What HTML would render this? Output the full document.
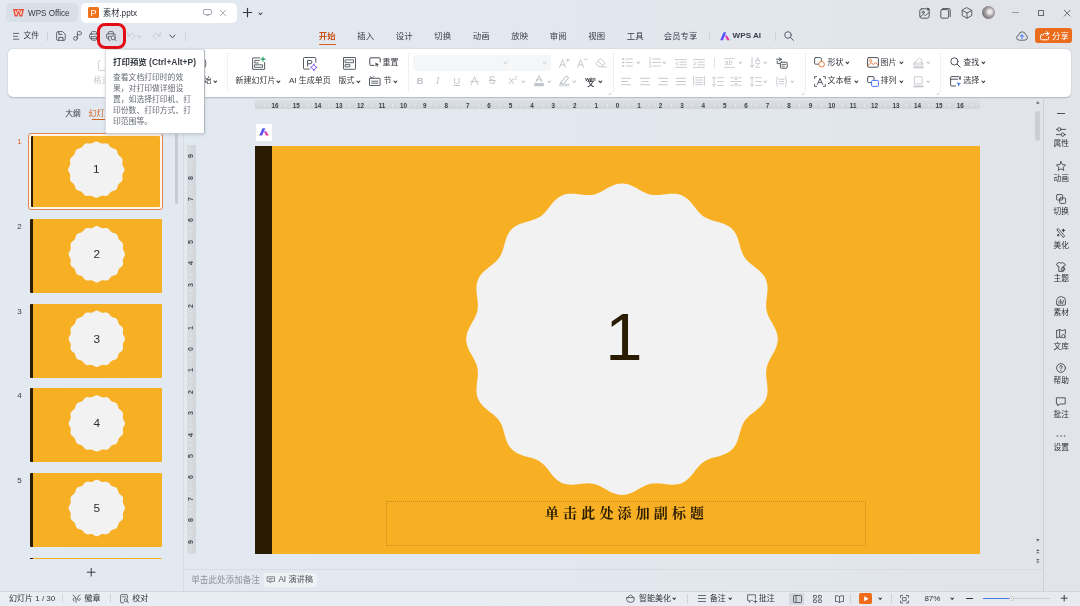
<!DOCTYPE html>
<html><head><meta charset="utf-8"><title>WPS</title><style>
*{box-sizing:border-box;margin:0;padding:0}
html,body{width:1080px;height:606px;overflow:hidden}
body{position:relative;background:#e2e9f0;font-family:"Liberation Sans","Noto Sans CJK SC",sans-serif;font-size:8.4px;color:#3b4048;line-height:1}
.a{position:absolute}
.t{position:absolute;white-space:nowrap;line-height:10px;height:10px}
svg{position:absolute;overflow:visible}
.s{fill:none;stroke:#454a52;stroke-width:1;stroke-linecap:round;stroke-linejoin:round}
.g{fill:none;stroke:#c0c4ca;stroke-width:0.9;stroke-linecap:round;stroke-linejoin:round}
.sep{position:absolute;width:1px;background:#eff0f3}
.t i{display:inline-block;width:var(--w,1em);text-align:center;font-style:normal;position:relative}
</style></head><body><div id="w" style="position:absolute;left:0;top:0;width:1080px;height:606px;will-change:transform;background:linear-gradient(90deg,#e2e9f0 0,#e2e8ef 50%,#e2e7ed 72%,#e1e5ea 88%,#e1e4e9 100%)">
<div class="a" style="left:6px;top:3px;width:72px;height:19px;background:#d9dfe6;border-radius:5px"></div>
<svg style="left:12.5px;top:8.5px" width="11" height="7.5" viewBox="0 0 22 15"><path d="M0 0 H22 L18.6 15 H13.2 L11 8.5 L8.8 15 H3.4 Z" fill="#e5503a"/><path d="M4.6 3 L6.4 11.2 L9.2 3 H12.8 L15.6 11.2 L17.4 3" fill="none" stroke="#fbeeea" stroke-width="1.8" stroke-linejoin="miter"/></svg>
<div class="t" style="left:27.5px;top:7.5px;font-size:8.7px;transform:scaleX(0.93);transform-origin:0 0;color:#33373e">WPS Office</div>
<div class="a" style="left:81px;top:3px;width:156px;height:19.5px;background:#fff;border-radius:5px"></div>
<div class="a" style="left:88px;top:7.3px;width:10.6px;height:10.4px;background:#f0721b;border-radius:1.5px"></div>
<div class="t" style="left:90.5px;top:7.5px;font-size:9px;color:#fff">P</div>
<div class="t" style="left:103px;top:7.5px;font-size:8.6px;transform:scaleX(0.95);transform-origin:0 0;color:#2f333a"><i>素</i><i>材</i>.pptx</div>
<svg style="left:202.5px;top:9px" width="9" height="7" viewBox="0 0 9 7"><rect x="0.5" y="0.5" width="8" height="5" rx="1.5" class="s" style="stroke:#9aa0a8;stroke-width:0.9"/><path d="M3.5 6.6 H5.5" class="s" style="stroke:#9aa0a8;stroke-width:0.8"/></svg>
<svg style="left:220.3px;top:9.7px" width="6" height="6" viewBox="0 0 6 6"><path d="M0.3 0.3 L5.7 5.7 M5.7 0.3 L0.3 5.7" class="s" style="stroke:#a4a9b0;stroke-width:0.9"/></svg>
<svg style="left:242.5px;top:8.3px" width="9" height="9" viewBox="0 0 9 9"><path d="M4.5 0.3 V8.7 M0.3 4.5 H8.7" class="s" style="stroke:#33373e;stroke-width:1.2"/></svg>
<svg class="a" style="left:258.5px;top:12.6px" width="2.95" height="1.67" viewBox="0 0 2.95 1.67"><path d="M0 0 L1.475 1.67 L2.95 0" fill="none" stroke="#4a4f57" stroke-width="1.1" stroke-linecap="round" stroke-linejoin="round"/></svg>
<svg style="left:919px;top:7px" width="12" height="12" viewBox="0 0 12 12"><rect x="0.8" y="1.8" width="9.4" height="9.4" rx="2" class="s" style="stroke-width:0.9"/><circle cx="4.2" cy="5.2" r="1.1" class="s" style="stroke-width:0.8"/><path d="M1.2 9.8 L4.6 7.2 L6.4 8.6 L9.8 5.6" class="s" style="stroke-width:0.8"/><path d="M8.4 0.6 L11.2 2.2 L8.4 3.8 Z" fill="#3b4048"/></svg>
<svg style="left:940px;top:7.5px" width="11" height="11" viewBox="0 0 11 11"><rect x="0.8" y="1.6" width="7.8" height="8.6" rx="1.2" class="s" style="stroke-width:0.9"/><path d="M2.6 0.6 H9 Q10.2 0.6 10.2 1.8 V8.6" class="s" style="stroke-width:0.9"/></svg>
<svg style="left:960.5px;top:7px" width="12" height="12" viewBox="0 0 12 12"><path d="M6 0.8 L10.8 3.4 V8.6 L6 11.2 L1.2 8.6 V3.4 Z M1.4 3.5 L6 6 L10.6 3.5 M6 6 V11" class="s" style="stroke-width:0.85"/></svg>
<div class="a" style="left:981.5px;top:6.3px;width:13px;height:13px;border-radius:50%;background:radial-gradient(circle at 60% 45%,#e9e6e6 0 18%,#a9a3a8 40%,#6e6a72 75%,#8c8a92 100%)"></div>
<div class="a" style="left:1011.5px;top:11.8px;width:7px;height:1px;background:#959aa2"></div>
<div class="a" style="left:1037.9px;top:9.5px;width:6.6px;height:6.6px;border:0.9px solid #656a72;border-radius:0.5px"></div>
<svg style="left:1063.8px;top:9.7px" width="6.4" height="6.4" viewBox="0 0 7 7"><path d="M0.3 0.3 L6.7 6.7 M6.7 0.3 L0.3 6.7" class="s" style="stroke:#4a4f57;stroke-width:0.9"/></svg>
<svg style="left:12.6px;top:32.6px" width="6.2" height="6.6" viewBox="0 0 6.2 6.6"><path d="M0.4 0.4 H5.8 M0.4 3.3 H4.6 M0.4 6.2 H5.8" class="s" style="stroke-width:0.8"/></svg>
<div class="t" style="left:23.4px;top:30.9px;font-size:7.8px;color:#33373e"><i>文</i><i>件</i></div>
<div class="sep" style="left:47px;top:31.5px;height:9px;background:#cfd3d9"></div>
<svg style="left:55.5px;top:31.2px" width="10" height="10" viewBox="0 0 10 10"><path d="M0.6 1.8 Q0.6 0.6 1.8 0.6 H6.6 L9.2 3.2 V8.2 Q9.2 9.4 8 9.4 H1.8 Q0.6 9.4 0.6 8.2 Z" class="s" style="stroke-width:0.82;stroke:#4a4f57"/><path d="M2.8 0.8 V3.4 H6 " class="s" style="stroke-width:0.9"/><path d="M2.8 9.2 V6.4 H7 V9.2" class="s" style="stroke-width:0.9"/></svg>
<svg style="left:73px;top:31.2px" width="9" height="10" viewBox="0 0 9 10"><path d="M4.4 6.2 V1.4 Q4.4 0.6 5.2 0.6 H7.2 Q8.4 0.6 8.4 2.2 Q8.4 3.8 7.2 3.8 H4.6" class="s" style="stroke-width:0.82;stroke:#4a4f57"/><circle cx="2.5" cy="7.4" r="1.9" class="s" style="stroke-width:0.82;stroke:#4a4f57"/></svg>
<svg style="left:89px;top:31.4px" width="10" height="10" viewBox="0 0 10 10"><path d="M2.4 3 V1.6 Q2.4 0.6 3.4 0.6 H6.6 Q7.6 0.6 7.6 1.6 V3" class="s" style="stroke-width:0.82;stroke:#4a4f57"/><rect x="0.6" y="3" width="8.8" height="4.6" rx="1.2" class="s" style="stroke-width:0.82;stroke:#4a4f57"/><path d="M2.4 5.6 H7.6 V8.4 Q7.6 9.2 6.8 9.2 H3.2 Q2.4 9.2 2.4 8.4 Z" fill="#e2e9f0" class="s" style="stroke-width:0.82;stroke:#4a4f57"/></svg>
<div class="a" style="left:100px;top:25.5px;width:24px;height:21px;background:#dde1e7;border-radius:5px"></div>
<svg style="left:105.6px;top:31.4px" width="11" height="10" viewBox="0 0 11 10"><path d="M2.4 2.8 V1.6 Q2.4 0.6 3.4 0.6 H6.4 Q7.4 0.6 7.4 1.6 V2.8" class="s" style="stroke-width:0.82;stroke:#4a4f57"/><path d="M9.2 4.4 V4 Q9.2 2.8 8 2.8 H1.8 Q0.6 2.8 0.6 4 V6.4 Q0.6 7.4 1.6 7.4 H2.4" class="s" style="stroke-width:0.82;stroke:#4a4f57"/><path d="M4.2 9.2 H3.2 Q2.4 9.2 2.4 8.4 V5.4 H4.4" class="s" style="stroke-width:0.82;stroke:#4a4f57"/><circle cx="7.2" cy="6.8" r="2.1" class="s" style="stroke-width:0.82;stroke:#4a4f57"/><path d="M8.8 8.4 L10.2 9.6" class="s" style="stroke-width:0.82;stroke:#4a4f57"/></svg>
<div class="a" style="left:97.4px;top:22.9px;width:28.8px;height:26.4px;border:3.8px solid #e50c16;border-radius:8px"></div>
<svg style="left:127px;top:32px" width="9" height="8" viewBox="0 0 9 8"><path d="M0.8 1 V4 H3.8 M1 3.8 Q3 0.8 6 1.6 Q8.4 2.6 7.8 5 Q7 7 4.6 7.2" class="g" style="stroke-width:0.9;stroke:#c6cad0"/></svg>
<svg class="a" style="left:138.3px;top:35.9px" width="2.62" height="1.5" viewBox="0 0 2.62 1.5"><path d="M0 0 L1.31 1.5 L2.62 0" fill="none" stroke="#c3c7cd" stroke-width="1.1" stroke-linecap="round" stroke-linejoin="round"/></svg>
<svg style="left:152px;top:32px" width="9" height="8" viewBox="0 0 9 8"><path d="M8.2 1 V4 H5.2 M8 3.8 Q6 0.8 3 1.6 Q0.6 2.6 1.2 5 Q2 7 4.4 7.2" class="g" style="stroke-width:0.9;stroke:#c6cad0"/></svg>
<svg class="a" style="left:169.7px;top:34.8px" width="4.92" height="2.9" viewBox="0 0 4.92 2.9"><path d="M0 0 L2.46 2.9 L4.92 0" fill="none" stroke="#4a4f57" stroke-width="1.0" stroke-linecap="round" stroke-linejoin="round"/></svg>
<div class="sep" style="left:185px;top:31.5px;height:9px;background:#cfd3d9"></div>
<div class="t" style="left:318.8px;top:31.3px;font-size:8.4px;color:#c9531a;font-weight:bold"><i>开</i><i>始</i></div>
<div class="a" style="left:318.8px;top:43.6px;width:16.8px;height:1.5px;background:#d4611c"></div>
<div class="t" style="left:357.3px;top:31.3px;font-size:8.4px;color:#3b4048"><i>插</i><i>入</i></div>
<div class="t" style="left:395.8px;top:31.3px;font-size:8.4px;color:#3b4048"><i>设</i><i>计</i></div>
<div class="t" style="left:434.3px;top:31.3px;font-size:8.4px;color:#3b4048"><i>切</i><i>换</i></div>
<div class="t" style="left:472.8px;top:31.3px;font-size:8.4px;color:#3b4048"><i>动</i><i>画</i></div>
<div class="t" style="left:511.3px;top:31.3px;font-size:8.4px;color:#3b4048"><i>放</i><i>映</i></div>
<div class="t" style="left:549.8px;top:31.3px;font-size:8.4px;color:#3b4048"><i>审</i><i>阅</i></div>
<div class="t" style="left:588.3px;top:31.3px;font-size:8.4px;color:#3b4048"><i>视</i><i>图</i></div>
<div class="t" style="left:626.8px;top:31.3px;font-size:8.4px;color:#3b4048"><i>工</i><i>具</i></div>
<div class="t" style="left:663.8px;top:31.3px;font-size:8.4px;color:#3b4048"><i>会</i><i>员</i><i>专</i><i>享</i></div>
<div class="sep" style="left:708.5px;top:31.5px;height:9px;background:#cfd3d9"></div>
<svg style="left:719.5px;top:32.2px" width="10" height="8.4" viewBox="0 0 20 17"><defs><linearGradient id="ai1" x1="0" y1="0" x2="1" y2="1"><stop offset="0" stop-color="#3a6bf5"/><stop offset="1" stop-color="#7a3cf0"/></linearGradient><linearGradient id="ai2" x1="0" y1="0" x2="1" y2="1"><stop offset="0" stop-color="#c53af0"/><stop offset="1" stop-color="#f5406a"/></linearGradient></defs><path d="M7 0.4 H12.4 L6 16.6 H0.2 Z" fill="url(#ai1)"/><path d="M9.8 7.2 L14 7.2 L19.8 16.6 H13.8 Z" fill="url(#ai2)"/></svg>
<div class="t" style="left:732.6px;top:31.3px;font-size:8.1px;font-weight:bold;color:#3b4048">WPS AI</div>
<div class="sep" style="left:775px;top:31.5px;height:9px;background:#cfd3d9"></div>
<svg style="left:783.5px;top:31.2px" width="10" height="10" viewBox="0 0 10 10"><circle cx="4" cy="4" r="3.3" class="s" style="stroke-width:0.95;stroke:#555a62"/><path d="M6.4 6.4 L9.4 9.4" class="s" style="stroke-width:0.95;stroke:#555a62"/></svg>
<svg style="left:1016px;top:30.5px" width="12" height="10" viewBox="0 0 12 10"><path d="M3 9.2 Q0.6 9.2 0.6 6.8 Q0.6 4.8 2.6 4.4 Q3 0.8 6.2 0.8 Q9 0.8 9.6 3.8 Q11.4 4.2 11.4 6.4 Q11.4 9.2 8.8 9.2 Z" class="s" style="stroke-width:0.9;stroke:#555a62" fill="#fff"/><path d="M6 7.6 V3.8 M4.4 5.4 L6 3.8 L7.6 5.4" class="s" style="stroke:#3a6bf5;stroke-width:1"/></svg>
<div class="a" style="left:1035.2px;top:28px;width:36.9px;height:15.4px;background:#ea6c1c;border-radius:3px"></div>
<svg style="left:1040px;top:31px" width="10" height="9.5" viewBox="0 0 10 9.5"><path d="M6.4 0.6 L9 2.6 L6.4 4.6 M9 2.6 H4.6 Q2.8 2.6 2.8 4.4" class="s" style="stroke:#fff;stroke-width:1"/><path d="M1.6 3.4 Q0.6 3.4 0.6 4.6 V7.6 Q0.6 8.8 1.8 8.8 H7.4 Q8.6 8.8 8.6 7.6 V6" class="s" style="stroke:#fff;stroke-width:1"/></svg>
<div class="t" style="left:1052px;top:30.8px;font-size:8.4px;color:#fff"><i>分</i><i>享</i></div>
<div class="a" style="left:8.2px;top:48.7px;width:1063px;height:48.2px;background:#fff;border-radius:5px;box-shadow:0 0.5px 1.5px rgba(105,110,120,0.4)"></div>
<svg style="left:98.4px;top:59.4px" width="9" height="12" viewBox="0 0 9 12"><path d="M2.4 1.6 H1.6 Q0.6 1.6 0.6 2.6 V10.4 Q0.6 11.4 1.6 11.4 H7.4 Q8.4 11.4 8.4 10.4 V2.6" class="g" style="stroke:#c9cdd3"/></svg>
<div class="t" style="left:93.4px;top:75.6px;font-size:8px;color:#c6cad0;"><i>格</i><i>式</i></div>
<div class="t" style="left:204.0px;top:57.6px;font-size:8.4px;color:#33373e;">)</div>
<div class="t" style="left:203.6px;top:76.2px;font-size:8px;color:#33373e;"><i>始</i></div>
<svg class="a" style="left:214.2px;top:80.8px" width="2.62" height="1.5" viewBox="0 0 2.62 1.5"><path d="M0 0 L1.31 1.5 L2.62 0" fill="none" stroke="#33373e" stroke-width="1.1" stroke-linecap="round" stroke-linejoin="round"/></svg>
<div class="sep" style="left:227px;top:53px;height:39px"></div>
<svg style="left:252px;top:56px" width="15" height="14" viewBox="0 0 15 14"><path d="M7.6 1.9 H1 Q0.6 1.9 0.6 2.3 V13 Q0.6 13.4 1 13.4 H12.2 Q12.6 13.4 12.6 13 V6.6" class="s" style="stroke-width:0.9"/><path d="M7.4 4.4 H2.8 V7 H6.4" class="s" style="stroke-width:0.85"/><rect x="2.8" y="8.8" width="7.8" height="2.5" class="s" style="stroke-width:0.85"/><path d="M11 1 V5.2 M8.9 3.1 H13.1" fill="none" stroke="#1f9c5a" stroke-width="1.05" stroke-linecap="round"/></svg>
<div class="t" style="left:235.6px;top:76px;font-size:8px;color:#33373e;"><i>新</i><i>建</i><i>幻</i><i>灯</i><i>片</i></div>
<svg class="a" style="left:277.2px;top:80.6px" width="2.79" height="1.58" viewBox="0 0 2.79 1.58"><path d="M0 0 L1.395 1.58 L2.79 0" fill="none" stroke="#33373e" stroke-width="1.1" stroke-linecap="round" stroke-linejoin="round"/></svg>
<svg style="left:303.4px;top:57.4px" width="15" height="14" viewBox="0 0 15 14"><path d="M12.8 5.4 V1.4 Q12.8 0.5 11.9 0.5 H1.4 Q0.5 0.5 0.5 1.4 V11.2 Q0.5 12.1 1.4 12.1 H6.4" class="s" style="stroke-width:0.9"/><path d="M4.6 9.2 V3.4 H7 Q8.9 3.4 8.9 5.1 Q8.9 6.8 7 6.8 H4.8" class="s" style="stroke-width:0.95"/><path d="M10.8 6.8 Q11.2 9.8 14.2 10.4 Q11.2 11 10.8 14 Q10.4 11 7.4 10.4 Q10.4 9.8 10.8 6.8 Z" fill="#fff" stroke="#7a56ee" stroke-width="0.9" stroke-linejoin="round"/></svg>
<div class="t" style="left:289px;top:76px;font-size:8px;color:#33373e;">AI <i>生</i><i>成</i><i>单</i><i>页</i></div>
<svg style="left:343.3px;top:57.4px" width="13" height="13" viewBox="0 0 13 13"><rect x="0.5" y="0.5" width="12" height="11.8" rx="0.6" class="s" style="stroke-width:0.9"/><rect x="2.5" y="2.9" width="8" height="2.8" class="s" style="stroke-width:0.85"/><rect x="2.5" y="7.6" width="4.4" height="2.2" class="s" style="stroke-width:0.85"/></svg>
<div class="t" style="left:338.6px;top:76px;font-size:8px;color:#33373e;"><i>版</i><i>式</i></div>
<svg class="a" style="left:357.2px;top:80.6px" width="2.79" height="1.58" viewBox="0 0 2.79 1.58"><path d="M0 0 L1.395 1.58 L2.79 0" fill="none" stroke="#33373e" stroke-width="1.1" stroke-linecap="round" stroke-linejoin="round"/></svg>
<svg style="left:369px;top:57.4px" width="12" height="11" viewBox="0 0 12 11"><path d="M11.2 5 V1.8 Q11.2 0.8 10.2 0.8 H1.8 Q0.8 0.8 0.8 1.8 V7.4 Q0.8 8.4 1.8 8.4 H5" class="s" style="stroke-width:1"/><path d="M6.4 5.4 L10 7.4 L8.4 7.9 L9.3 9.7 L8.6 10 L7.7 8.3 L6.6 9.4 Z" fill="#454a52"/></svg>
<div class="t" style="left:382.6px;top:57.7px;font-size:8px;color:#33373e;"><i>重</i><i>置</i></div>
<svg style="left:368.8px;top:76px" width="12" height="10" viewBox="0 0 12 10"><path d="M1.3 0.4 L3.1 2.3 L4.9 0.4" class="s" style="stroke-width:0.8"/><rect x="0.5" y="2.3" width="10.6" height="7.2" rx="0.5" class="s" style="stroke-width:0.9"/><path d="M2.6 5.2 H9 M2.6 7.2 H9" class="s" style="stroke-width:0.85"/></svg>
<div class="t" style="left:383.6px;top:76px;font-size:8px;color:#33373e;"><i>节</i></div>
<svg class="a" style="left:394.0px;top:80.6px" width="2.79" height="1.58" viewBox="0 0 2.79 1.58"><path d="M0 0 L1.395 1.58 L2.79 0" fill="none" stroke="#33373e" stroke-width="1.1" stroke-linecap="round" stroke-linejoin="round"/></svg>
<div class="sep" style="left:407.8px;top:53px;height:39px"></div>
<div class="a" style="left:412.6px;top:55px;width:138px;height:15.6px;background:#f5f6f8;border-radius:4px"></div>
<div class="a" style="left:510.4px;top:55.4px;width:1px;height:15px;background:#fbfbfc"></div>
<svg class="a" style="left:503.5px;top:62.0px" width="2.95" height="1.58" viewBox="0 0 2.95 1.58"><path d="M0 0 L1.475 1.58 L2.95 0" fill="none" stroke="#d3d6db" stroke-width="1.1" stroke-linecap="round" stroke-linejoin="round"/></svg>
<svg class="a" style="left:542.5px;top:62.0px" width="2.95" height="1.58" viewBox="0 0 2.95 1.58"><path d="M0 0 L1.475 1.58 L2.95 0" fill="none" stroke="#d3d6db" stroke-width="1.1" stroke-linecap="round" stroke-linejoin="round"/></svg>
<svg style="left:558.5px;top:57.5px" width="11" height="10" viewBox="0 0 11 10"><path d="M0.6 9.4 L3.6 1.6 L6.6 9.4 M1.6 6.8 H5.6" class="g"/><path d="M8.8 0.6 V3.6 M7.3 2.1 H10.3" class="g" style="stroke-width:0.8"/></svg>
<svg style="left:576.5px;top:57.5px" width="11" height="10" viewBox="0 0 11 10"><path d="M0.6 9.4 L3.6 1.6 L6.6 9.4 M1.6 6.8 H5.6" class="g"/><path d="M7.3 1.4 H10.3" class="g" style="stroke-width:0.8"/></svg>
<svg style="left:594.5px;top:57.6px" width="12" height="10" viewBox="0 0 12 10"><path d="M5.8 0.8 L10.4 5 L6.8 8.6 H3.6 L1 6 Z M3.2 3.4 L7.8 7.6 M7 9 H11.4" class="g"/></svg>
<div class="t" style="left:416.4px;top:76px;font-size:9.6px;color:#c0c4ca;font-weight:bold">B</div>
<div class="t" style="left:436px;top:76px;font-size:10px;color:#c0c4ca;font-style:italic;font-family:'Liberation Serif',serif">I</div>
<div class="t" style="left:453.4px;top:76px;font-size:9.2px;color:#c0c4ca;text-decoration:underline">U</div>
<svg style="left:470px;top:76.4px" width="9" height="9" viewBox="0 0 9 9"><path d="M1.2 8.6 L4.5 0.8 L7.8 8.6" class="g"/><path d="M0.2 5.4 H8.8" class="g" style="stroke-width:0.8"/></svg>
<div class="t" style="left:488.8px;top:76px;font-size:10.2px;color:#c0c4ca;text-decoration:line-through">S</div>
<div class="t" style="left:508.4px;top:76px;font-size:9px;color:#c0c4ca;">X</div>
<div class="t" style="left:514.6px;top:72.6px;font-size:5px;color:#c0c4ca;">2</div>
<svg class="a" style="left:521.5px;top:80.7px" width="2.62" height="1.5" viewBox="0 0 2.62 1.5"><path d="M0 0 L1.31 1.5 L2.62 0" fill="none" stroke="#c0c4ca" stroke-width="1.1" stroke-linecap="round" stroke-linejoin="round"/></svg>
<svg style="left:533.5px;top:74.8px" width="10" height="11" viewBox="0 0 10 11"><path d="M2 6.8 L5 0.8 L8 6.8 M3 4.8 H7" class="g" style="stroke:#b4b9c0"/><rect x="0.2" y="8" width="9.6" height="3.2" fill="#c3c7cd"/></svg>
<svg class="a" style="left:547.7px;top:80.7px" width="2.62" height="1.5" viewBox="0 0 2.62 1.5"><path d="M0 0 L1.31 1.5 L2.62 0" fill="none" stroke="#c0c4ca" stroke-width="1.1" stroke-linecap="round" stroke-linejoin="round"/></svg>
<svg style="left:558.5px;top:74.9px" width="11" height="11" viewBox="0 0 11 11"><path d="M2 7.4 L7.4 1 L9.6 2.8 L4.6 9 Z M2 7.4 L1.4 9.4 L4.6 9" class="g" style="stroke:#a9aeb6"/><rect x="0.2" y="8.6" width="10.4" height="2.6" fill="#d6d9de"/></svg>
<svg class="a" style="left:573.3px;top:80.7px" width="2.62" height="1.5" viewBox="0 0 2.62 1.5"><path d="M0 0 L1.31 1.5 L2.62 0" fill="none" stroke="#c0c4ca" stroke-width="1.1" stroke-linecap="round" stroke-linejoin="round"/></svg>
<div class="t" style="left:585.2px;top:74px;font-size:5.6px;color:#33373e;letter-spacing:-0.2px;font-weight:bold">wén</div>
<div class="t" style="left:587.3px;top:78.6px;font-size:7px;color:#33373e;font-weight:bold"><i>文</i></div>
<svg class="a" style="left:599.4px;top:80.6px" width="2.79" height="1.58" viewBox="0 0 2.79 1.58"><path d="M0 0 L1.395 1.58 L2.79 0" fill="none" stroke="#33373e" stroke-width="1.1" stroke-linecap="round" stroke-linejoin="round"/></svg>
<svg style="left:607.6px;top:92.2px" width="3" height="3" viewBox="0 0 3 3"><path d="M2.6 0.4 V2.6 H0.4" fill="none" stroke="#c4c8ce" stroke-width="0.7"/></svg>
<div class="sep" style="left:613.4px;top:53px;height:39px"></div>
<svg style="left:622px;top:58.4px" width="12" height="9" viewBox="0 0 12 9"><path d="M0.6 1 H1.6 M0.6 4.5 H1.6 M0.6 8 H1.6" fill="none" stroke="#c0c4ca" stroke-width="1.3" stroke-linecap="round"/><path d="M4 1 H10.4 M4 4.5 H10.4 M4 8 H10.4" class="g" style="stroke-width:0.9"/></svg>
<svg class="a" style="left:636.9px;top:62.0px" width="2.62" height="1.5" viewBox="0 0 2.62 1.5"><path d="M0 0 L1.31 1.5 L2.62 0" fill="none" stroke="#c0c4ca" stroke-width="1.1" stroke-linecap="round" stroke-linejoin="round"/></svg>
<svg style="left:648.6px;top:58.4px" width="12" height="9" viewBox="0 0 12 9"><path d="M1.2 -0.6 V2.4 M0.4 3.8 H1.8 V5 H0.4 M0.4 7 H1.8 V9.4 H0.4" class="g" style="stroke-width:0.7"/><path d="M4 1 H11.4 M4 4.5 H11.4 M4 8 H11.4" class="g" style="stroke-width:0.9"/></svg>
<svg class="a" style="left:663.3px;top:62.0px" width="2.62" height="1.5" viewBox="0 0 2.62 1.5"><path d="M0 0 L1.31 1.5 L2.62 0" fill="none" stroke="#c0c4ca" stroke-width="1.1" stroke-linecap="round" stroke-linejoin="round"/></svg>
<svg style="left:675px;top:58.6px" width="12" height="9" viewBox="0 0 12 9"><path d="M0.4 0.6 H11.4 M5 3.2 H11.4 M5 5.8 H11.4 M0.4 8.4 H11.4 M3.2 3 L0.8 4.5 L3.2 6" class="g" style="stroke-width:0.85"/></svg>
<svg style="left:693.2px;top:58.6px" width="12" height="9" viewBox="0 0 12 9"><path d="M0.4 0.6 H11.4 M5 3.2 H11.4 M5 5.8 H11.4 M0.4 8.4 H11.4 M0.8 3 L3.2 4.5 L0.8 6" class="g" style="stroke-width:0.85"/></svg>
<div class="sep" style="left:714px;top:58px;height:10px;background:#dfe2e6"></div>
<svg style="left:724px;top:57.6px" width="11" height="10" viewBox="0 0 11 10"><path d="M0.4 0.6 H10.6 M0.4 9.4 H10.6" class="g" style="stroke-width:0.8"/></svg>
<div class="t" style="left:724.4px;top:57.9px;font-size:7.4px;color:#c0c4ca;">ab</div>
<svg class="a" style="left:738.5px;top:62.0px" width="2.62" height="1.5" viewBox="0 0 2.62 1.5"><path d="M0 0 L1.31 1.5 L2.62 0" fill="none" stroke="#c0c4ca" stroke-width="1.1" stroke-linecap="round" stroke-linejoin="round"/></svg>
<svg style="left:749.5px;top:57.2px" width="11" height="11" viewBox="0 0 11 11"><path d="M2 0.6 V10 M0.4 8.2 L2 10.2 L3.6 8.2" class="g"/><path d="M5.4 5 L7.6 0.6 L9.8 5 M6.2 3.6 H9" class="g" style="stroke-width:0.8"/><path d="M5.6 6.4 H9.6 L5.6 10.4 H9.8" class="g" style="stroke-width:0.8"/></svg>
<svg class="a" style="left:763.7px;top:62.0px" width="2.62" height="1.5" viewBox="0 0 2.62 1.5"><path d="M0 0 L1.31 1.5 L2.62 0" fill="none" stroke="#c0c4ca" stroke-width="1.1" stroke-linecap="round" stroke-linejoin="round"/></svg>
<svg style="left:776px;top:57px" width="12" height="12" viewBox="0 0 12 12"><path d="M0.6 2.2 H5.4 M3.2 0.8 L5.6 2.4 L3.2 4" class="s" style="stroke-width:0.9"/><path d="M1.2 4 V6.6 H3.6" class="s" style="stroke-width:0.9"/><rect x="4.4" y="5.2" width="6.8" height="6" rx="1" class="s" style="stroke-width:0.95"/><path d="M6 7.4 H9.6 M6 9.2 H8.4" class="s" style="stroke-width:0.8"/></svg>
<svg style="left:621.4px;top:77px" width="12" height="9" viewBox="0 0 12 9"><path d="M0.5 1.3 H9.5 M0.5 4.5 H6.5 M0.5 7.7 H9.5 " fill="none" stroke="#c0c4ca" stroke-width="0.9" stroke-linecap="round"/></svg>
<svg style="left:639.6px;top:77px" width="12" height="9" viewBox="0 0 12 9"><path d="M0.5 1.3 H9.5 M2 4.5 H8 M0.5 7.7 H9.5 " fill="none" stroke="#c0c4ca" stroke-width="0.9" stroke-linecap="round"/></svg>
<svg style="left:657.8px;top:77px" width="12" height="9" viewBox="0 0 12 9"><path d="M0.5 1.3 H9.5 M3.5 4.5 H9.5 M0.5 7.7 H9.5 " fill="none" stroke="#c0c4ca" stroke-width="0.9" stroke-linecap="round"/></svg>
<svg style="left:676px;top:77px" width="12" height="9" viewBox="0 0 12 9"><path d="M0.5 1.3 H9.5 M0.5 4.5 H9.5 M0.5 7.7 H9.5 " fill="none" stroke="#c0c4ca" stroke-width="0.9" stroke-linecap="round"/></svg>
<svg style="left:692.6px;top:76.4px" width="12" height="10" viewBox="0 0 12 10"><path d="M0.6 0.6 V9.4 M11.4 0.6 V9.4 M2.6 1.6 H9.4 M2.6 4 H9.4 M2.6 6.4 H9.4 M2.6 8.6 H9.4" class="g" style="stroke-width:0.85"/></svg>
<svg style="left:712.4px;top:76px" width="12" height="11" viewBox="0 0 12 11"><path d="M2 1 V10 M0.4 2.6 L2 0.8 L3.6 2.6 M0.4 8.4 L2 10.2 L3.6 8.4 M5.6 1.6 H11.4 M5.6 5.5 H11.4 M5.6 9.4 H11.4" class="g" style="stroke-width:0.85"/></svg>
<svg style="left:730.2px;top:76px" width="12" height="11" viewBox="0 0 12 11"><path d="M0.6 5.5 H11.4 M6 0.4 V3.6 M4.6 2.2 L6 3.8 L7.4 2.2 M6 10.6 V7.4 M4.6 8.8 L6 7.2 L7.4 8.8 M0.8 1.6 H3.6 M8.4 1.6 H11.2 M0.8 9.4 H3.6 M8.4 9.4 H11.2" class="g" style="stroke-width:0.8"/></svg>
<svg style="left:749.6px;top:76px" width="12" height="11" viewBox="0 0 12 11"><path d="M2 1 V10 M0.4 2.6 L2 0.8 L3.6 2.6 M0.4 8.4 L2 10.2 L3.6 8.4 M5.6 1.6 H11.4 M5.6 5.5 H11.4 M5.6 9.4 H11.4" class="g" style="stroke-width:0.85"/></svg>
<svg class="a" style="left:763.7px;top:80.7px" width="2.62" height="1.5" viewBox="0 0 2.62 1.5"><path d="M0 0 L1.31 1.5 L2.62 0" fill="none" stroke="#c0c4ca" stroke-width="1.1" stroke-linecap="round" stroke-linejoin="round"/></svg>
<svg style="left:775px;top:75.8px" width="13" height="11" viewBox="0 0 13 11"><path d="M2.4 0.6 Q0.4 5.5 2.4 10.4 M10.6 0.6 Q12.6 5.5 10.6 10.4 M4 3.2 H9 M4 5.5 H9 M4 7.8 H9" class="g" style="stroke-width:0.85"/></svg>
<svg class="a" style="left:790.7px;top:80.7px" width="2.62" height="1.5" viewBox="0 0 2.62 1.5"><path d="M0 0 L1.31 1.5 L2.62 0" fill="none" stroke="#c0c4ca" stroke-width="1.1" stroke-linecap="round" stroke-linejoin="round"/></svg>
<svg style="left:800.8px;top:92.2px" width="3" height="3" viewBox="0 0 3 3"><path d="M2.6 0.4 V2.6 H0.4" fill="none" stroke="#c4c8ce" stroke-width="0.7"/></svg>
<div class="sep" style="left:804.8px;top:53px;height:39px"></div>
<svg style="left:814px;top:57.2px" width="12" height="11" viewBox="0 0 12 11"><rect x="0.6" y="0.6" width="6.8" height="6.6" rx="1" class="s" style="stroke-width:0.9"/><circle cx="7.6" cy="7.2" r="2.8" fill="#fff" stroke="#e8702a" stroke-width="0.9"/></svg>
<div class="t" style="left:827.4px;top:57.8px;font-size:8px;color:#33373e;"><i>形</i><i>状</i></div>
<svg class="a" style="left:846.4px;top:62.2px" width="2.79" height="1.58" viewBox="0 0 2.79 1.58"><path d="M0 0 L1.395 1.58 L2.79 0" fill="none" stroke="#33373e" stroke-width="1.1" stroke-linecap="round" stroke-linejoin="round"/></svg>
<svg style="left:814px;top:75.8px" width="12" height="11" viewBox="0 0 12 11"><path d="M2.6 0.6 H0.6 V2.6 M9.4 0.6 H11.4 V2.6 M2.6 10.4 H0.6 V8.4 M9.4 10.4 H11.4 V8.4" class="s" style="stroke-width:0.85"/><path d="M3.4 8.4 L6 2.4 L8.6 8.4 M4.4 6.4 H7.6" class="s" style="stroke-width:0.9"/></svg>
<div class="t" style="left:827.4px;top:76.2px;font-size:8px;color:#33373e;"><i>文</i><i>本</i><i>框</i></div>
<svg class="a" style="left:854.5px;top:80.6px" width="2.79" height="1.58" viewBox="0 0 2.79 1.58"><path d="M0 0 L1.395 1.58 L2.79 0" fill="none" stroke="#33373e" stroke-width="1.1" stroke-linecap="round" stroke-linejoin="round"/></svg>
<svg style="left:866.8px;top:57.4px" width="12" height="11" viewBox="0 0 12 11"><rect x="0.6" y="0.6" width="10.8" height="9.6" rx="1.2" class="s" style="stroke-width:0.95"/><circle cx="3.6" cy="3.6" r="1.1" fill="none" stroke="#e8702a" stroke-width="0.9"/><path d="M0.8 8.6 L4.2 5.8 L6.4 7.6 L8.6 5.6 L11.2 8" fill="none" stroke="#e8702a" stroke-width="0.9" stroke-linejoin="round"/></svg>
<div class="t" style="left:880.5px;top:57.8px;font-size:8px;color:#33373e;"><i>图</i><i>片</i></div>
<svg class="a" style="left:899.9px;top:62.2px" width="2.79" height="1.58" viewBox="0 0 2.79 1.58"><path d="M0 0 L1.395 1.58 L2.79 0" fill="none" stroke="#33373e" stroke-width="1.1" stroke-linecap="round" stroke-linejoin="round"/></svg>
<svg style="left:866.8px;top:75.8px" width="12" height="11" viewBox="0 0 12 11"><rect x="0.6" y="0.6" width="6.4" height="6" rx="1" class="s" style="stroke-width:0.95"/><rect x="4.6" y="4.4" width="6.8" height="6" rx="1" fill="#fff" stroke="#3a6bf5" stroke-width="0.95"/></svg>
<div class="t" style="left:880.5px;top:76.2px;font-size:8px;color:#33373e;"><i>排</i><i>列</i></div>
<svg class="a" style="left:899.9px;top:80.6px" width="2.79" height="1.58" viewBox="0 0 2.79 1.58"><path d="M0 0 L1.395 1.58 L2.79 0" fill="none" stroke="#33373e" stroke-width="1.1" stroke-linecap="round" stroke-linejoin="round"/></svg>
<svg style="left:912.5px;top:57px" width="11" height="12" viewBox="0 0 11 12"><path d="M2.4 6 V4.6 L6.4 1 L9 3.2 L8.2 6 M1.2 6 H9.8 V8 H1.2 Z" class="g" style="stroke-width:0.85"/><rect x="0.4" y="9.4" width="10.2" height="2" fill="#c8ccd2"/></svg>
<svg class="a" style="left:927.4px;top:62.2px" width="2.62" height="1.5" viewBox="0 0 2.62 1.5"><path d="M0 0 L1.31 1.5 L2.62 0" fill="none" stroke="#c0c4ca" stroke-width="1.1" stroke-linecap="round" stroke-linejoin="round"/></svg>
<svg style="left:912.5px;top:75.6px" width="11" height="12" viewBox="0 0 11 12"><rect x="1.8" y="0.8" width="7.4" height="7" class="g" style="stroke-width:0.85"/><rect x="0.4" y="9.4" width="10.2" height="2" fill="#c8ccd2"/></svg>
<svg class="a" style="left:927.4px;top:80.7px" width="2.62" height="1.5" viewBox="0 0 2.62 1.5"><path d="M0 0 L1.31 1.5 L2.62 0" fill="none" stroke="#c0c4ca" stroke-width="1.1" stroke-linecap="round" stroke-linejoin="round"/></svg>
<svg style="left:936px;top:92.2px" width="3" height="3" viewBox="0 0 3 3"><path d="M2.6 0.4 V2.6 H0.4" fill="none" stroke="#c4c8ce" stroke-width="0.7"/></svg>
<div class="sep" style="left:940.2px;top:53px;height:39px"></div>
<svg style="left:950px;top:57.4px" width="11" height="11" viewBox="0 0 11 11"><circle cx="4.4" cy="4.4" r="3.6" class="s" style="stroke-width:0.95"/><path d="M7.2 7.2 L10.2 10.2" class="s" style="stroke-width:1"/></svg>
<div class="t" style="left:963.2px;top:57.8px;font-size:8px;color:#33373e;"><i>查</i><i>找</i></div>
<svg class="a" style="left:982.2px;top:62.2px" width="2.79" height="1.58" viewBox="0 0 2.79 1.58"><path d="M0 0 L1.395 1.58 L2.79 0" fill="none" stroke="#33373e" stroke-width="1.1" stroke-linecap="round" stroke-linejoin="round"/></svg>
<svg style="left:949.6px;top:76px" width="12" height="11" viewBox="0 0 12 11"><path d="M9.6 3 V1.6 Q9.6 0.6 8.6 0.6 H1.6 Q0.6 0.6 0.6 1.6 V9 Q0.6 10 1.6 10 H5.6 M0.8 3.2 H7.8" class="s" style="stroke-width:0.95"/><path d="M10.4 0.6 V3.4" class="s" style="stroke-width:0.8"/><path d="M7 6.2 L11.2 7.8 L9.4 8.6 L8.6 10.4 Z" fill="#3a6bf5"/></svg>
<div class="t" style="left:963.2px;top:76.2px;font-size:8px;color:#33373e;"><i>选</i><i>择</i></div>
<svg class="a" style="left:982.2px;top:80.6px" width="2.79" height="1.58" viewBox="0 0 2.79 1.58"><path d="M0 0 L1.395 1.58 L2.79 0" fill="none" stroke="#33373e" stroke-width="1.1" stroke-linecap="round" stroke-linejoin="round"/></svg>
<div class="t" style="left:65.2px;top:108.6px;font-size:7.8px;color:#3b4048"><i>大</i><i>纲</i></div>
<div class="t" style="left:88.6px;top:108.6px;font-size:7.8px;color:#d4611c"><i>幻</i><i>灯</i><i>片</i></div>
<div class="a" style="left:91.6px;top:119.2px;width:18px;height:1.3px;background:#d4611c"></div>
<div class="a" style="left:28.3px;top:132.9px;width:134.9px;height:76.8px;border:1.5px solid #dd875c;border-radius:3px;background:#fff6e6"></div><div class="a" style="left:31px;top:136.1px;width:129px;height:70.7px;background:#f7b024;border-radius:1.2px"></div><div class="a" style="left:31px;top:136.1px;width:2.1px;height:70.7px;background:#2a1b03;border-radius:1.2px 0 0 1.2px"></div><svg style="left:0;top:0" width="1" height="1"><path d="M124.47 169.65 L124.21 168.27 L123.54 166.96 L122.82 165.71 L122.36 164.46 L122.30 163.13 L122.49 161.69 L122.60 160.23 L122.33 158.86 L121.55 157.69 L120.44 156.73 L119.29 155.85 L118.39 154.87 L117.83 153.66 L117.45 152.26 L117.00 150.87 L116.21 149.71 L115.05 148.93 L113.66 148.47 L112.26 148.09 L111.05 147.53 L110.07 146.63 L109.19 145.48 L108.23 144.37 L107.07 143.59 L105.70 143.32 L104.23 143.43 L102.79 143.62 L101.46 143.56 L100.21 143.10 L98.96 142.38 L97.65 141.72 L96.27 141.45 L94.90 141.72 L93.59 142.38 L92.34 143.10 L91.08 143.56 L89.75 143.62 L88.32 143.43 L86.85 143.32 L85.48 143.59 L84.32 144.37 L83.36 145.48 L82.48 146.63 L81.50 147.53 L80.29 148.09 L78.89 148.47 L77.49 148.93 L76.33 149.71 L75.55 150.87 L75.09 152.26 L74.72 153.66 L74.16 154.87 L73.26 155.85 L72.11 156.73 L70.99 157.69 L70.22 158.86 L69.94 160.23 L70.05 161.69 L70.24 163.13 L70.19 164.46 L69.73 165.71 L69.01 166.96 L68.34 168.27 L68.07 169.65 L68.34 171.02 L69.01 172.33 L69.73 173.58 L70.19 174.84 L70.24 176.17 L70.05 177.60 L69.94 179.07 L70.22 180.44 L70.99 181.60 L72.11 182.56 L73.26 183.44 L74.16 184.43 L74.72 185.63 L75.09 187.03 L75.55 188.43 L76.33 189.59 L77.49 190.37 L78.89 190.83 L80.29 191.20 L81.50 191.76 L82.48 192.66 L83.36 193.81 L84.32 194.93 L85.48 195.70 L86.85 195.98 L88.32 195.87 L89.75 195.68 L91.08 195.74 L92.34 196.19 L93.59 196.92 L94.90 197.58 L96.27 197.85 L97.65 197.58 L98.96 196.92 L100.21 196.19 L101.46 195.74 L102.79 195.68 L104.23 195.87 L105.70 195.98 L107.07 195.70 L108.23 194.93 L109.19 193.81 L110.07 192.66 L111.05 191.76 L112.26 191.20 L113.66 190.83 L115.05 190.37 L116.21 189.59 L117.00 188.43 L117.45 187.03 L117.83 185.63 L118.39 184.43 L119.29 183.44 L120.44 182.56 L121.55 181.60 L122.33 180.44 L122.60 179.07 L122.49 177.60 L122.30 176.17 L122.36 174.84 L122.82 173.58 L123.54 172.33 L124.21 171.02Z" fill="#f2f2f2"/></svg><div class="t" style="left:86.274px;top:163.44715000000002px;width:20px;text-align:center;font-size:11.8px;line-height:12px;height:12px;color:#302c28">1</div><div class="t" style="left:14.6px;top:137.0px;width:10px;text-align:center;font-size:8px;color:#e0641e">1</div>
<div class="a" style="left:30px;top:219.2px;width:132px;height:73.8px;background:#f7b024;border-radius:1.2px"></div><div class="a" style="left:30px;top:219.2px;width:2.7px;height:73.8px;background:#2a1b03;border-radius:1.2px 0 0 1.2px"></div><svg style="left:0;top:0" width="1" height="1"><path d="M124.99 254.22 L124.72 252.85 L124.06 251.53 L123.34 250.28 L122.88 249.03 L122.82 247.70 L123.01 246.26 L123.12 244.80 L122.85 243.43 L122.07 242.26 L120.96 241.30 L119.81 240.42 L118.91 239.44 L118.35 238.23 L117.97 236.84 L117.51 235.44 L116.73 234.28 L115.57 233.50 L114.17 233.04 L112.78 232.66 L111.57 232.10 L110.59 231.20 L109.71 230.05 L108.75 228.94 L107.58 228.16 L106.21 227.89 L104.75 228.00 L103.31 228.19 L101.98 228.13 L100.73 227.67 L99.48 226.95 L98.16 226.29 L96.79 226.02 L95.42 226.29 L94.11 226.95 L92.85 227.67 L91.60 228.13 L90.27 228.19 L88.84 228.00 L87.37 227.89 L86.00 228.16 L84.84 228.94 L83.88 230.05 L83.00 231.20 L82.01 232.10 L80.81 232.66 L79.41 233.04 L78.01 233.50 L76.85 234.28 L76.07 235.44 L75.61 236.84 L75.24 238.23 L74.67 239.44 L73.78 240.42 L72.63 241.30 L71.51 242.26 L70.74 243.43 L70.46 244.80 L70.57 246.26 L70.76 247.70 L70.70 249.03 L70.25 250.28 L69.52 251.53 L68.86 252.85 L68.59 254.22 L68.86 255.59 L69.52 256.90 L70.25 258.16 L70.70 259.41 L70.76 260.74 L70.57 262.17 L70.46 263.64 L70.74 265.01 L71.51 266.17 L72.63 267.13 L73.78 268.01 L74.67 269.00 L75.24 270.20 L75.61 271.60 L76.07 273.00 L76.85 274.16 L78.01 274.94 L79.41 275.40 L80.81 275.77 L82.01 276.34 L83.00 277.23 L83.88 278.38 L84.84 279.50 L86.00 280.27 L87.37 280.55 L88.84 280.44 L90.27 280.25 L91.60 280.31 L92.85 280.76 L94.11 281.49 L95.42 282.15 L96.79 282.42 L98.16 282.15 L99.48 281.49 L100.73 280.76 L101.98 280.31 L103.31 280.25 L104.75 280.44 L106.21 280.55 L107.58 280.27 L108.75 279.50 L109.71 278.38 L110.59 277.23 L111.57 276.34 L112.78 275.77 L114.17 275.40 L115.57 274.94 L116.73 274.16 L117.51 273.00 L117.97 271.60 L118.35 270.20 L118.91 269.00 L119.81 268.01 L120.96 267.13 L122.07 266.17 L122.85 265.01 L123.12 263.64 L123.01 262.17 L122.82 260.74 L122.88 259.41 L123.34 258.16 L124.06 256.90 L124.72 255.59Z" fill="#f2f2f2"/></svg><div class="t" style="left:86.792px;top:248.0181px;width:20px;text-align:center;font-size:11.8px;line-height:12px;height:12px;color:#302c28">2</div><div class="t" style="left:14.6px;top:222.2px;width:10px;text-align:center;font-size:8px;color:#3b4048">2</div>
<div class="a" style="left:30px;top:303.8px;width:132px;height:73.8px;background:#f7b024;border-radius:1.2px"></div><div class="a" style="left:30px;top:303.8px;width:2.7px;height:73.8px;background:#2a1b03;border-radius:1.2px 0 0 1.2px"></div><svg style="left:0;top:0" width="1" height="1"><path d="M124.99 338.82 L124.72 337.45 L124.06 336.13 L123.34 334.88 L122.88 333.63 L122.82 332.30 L123.01 330.86 L123.12 329.40 L122.85 328.03 L122.07 326.86 L120.96 325.90 L119.81 325.02 L118.91 324.04 L118.35 322.83 L117.97 321.44 L117.51 320.04 L116.73 318.88 L115.57 318.10 L114.17 317.64 L112.78 317.26 L111.57 316.70 L110.59 315.80 L109.71 314.65 L108.75 313.54 L107.58 312.76 L106.21 312.49 L104.75 312.60 L103.31 312.79 L101.98 312.73 L100.73 312.27 L99.48 311.55 L98.16 310.89 L96.79 310.62 L95.42 310.89 L94.11 311.55 L92.85 312.27 L91.60 312.73 L90.27 312.79 L88.84 312.60 L87.37 312.49 L86.00 312.76 L84.84 313.54 L83.88 314.65 L83.00 315.80 L82.01 316.70 L80.81 317.26 L79.41 317.64 L78.01 318.10 L76.85 318.88 L76.07 320.04 L75.61 321.44 L75.24 322.83 L74.67 324.04 L73.78 325.02 L72.63 325.90 L71.51 326.86 L70.74 328.03 L70.46 329.40 L70.57 330.86 L70.76 332.30 L70.70 333.63 L70.25 334.88 L69.52 336.13 L68.86 337.45 L68.59 338.82 L68.86 340.19 L69.52 341.50 L70.25 342.76 L70.70 344.01 L70.76 345.34 L70.57 346.77 L70.46 348.24 L70.74 349.61 L71.51 350.77 L72.63 351.73 L73.78 352.61 L74.67 353.60 L75.24 354.80 L75.61 356.20 L76.07 357.60 L76.85 358.76 L78.01 359.54 L79.41 360.00 L80.81 360.37 L82.01 360.94 L83.00 361.83 L83.88 362.98 L84.84 364.10 L86.00 364.87 L87.37 365.15 L88.84 365.04 L90.27 364.85 L91.60 364.91 L92.85 365.36 L94.11 366.09 L95.42 366.75 L96.79 367.02 L98.16 366.75 L99.48 366.09 L100.73 365.36 L101.98 364.91 L103.31 364.85 L104.75 365.04 L106.21 365.15 L107.58 364.87 L108.75 364.10 L109.71 362.98 L110.59 361.83 L111.57 360.94 L112.78 360.37 L114.17 360.00 L115.57 359.54 L116.73 358.76 L117.51 357.60 L117.97 356.20 L118.35 354.80 L118.91 353.60 L119.81 352.61 L120.96 351.73 L122.07 350.77 L122.85 349.61 L123.12 348.24 L123.01 346.77 L122.82 345.34 L122.88 344.01 L123.34 342.76 L124.06 341.50 L124.72 340.19Z" fill="#f2f2f2"/></svg><div class="t" style="left:86.792px;top:332.6181px;width:20px;text-align:center;font-size:11.8px;line-height:12px;height:12px;color:#302c28">3</div><div class="t" style="left:14.6px;top:306.8px;width:10px;text-align:center;font-size:8px;color:#3b4048">3</div>
<div class="a" style="left:30px;top:388.4px;width:132px;height:73.8px;background:#f7b024;border-radius:1.2px"></div><div class="a" style="left:30px;top:388.4px;width:2.7px;height:73.8px;background:#2a1b03;border-radius:1.2px 0 0 1.2px"></div><svg style="left:0;top:0" width="1" height="1"><path d="M124.99 423.42 L124.72 422.05 L124.06 420.73 L123.34 419.48 L122.88 418.23 L122.82 416.90 L123.01 415.46 L123.12 414.00 L122.85 412.63 L122.07 411.46 L120.96 410.50 L119.81 409.62 L118.91 408.64 L118.35 407.43 L117.97 406.04 L117.51 404.64 L116.73 403.48 L115.57 402.70 L114.17 402.24 L112.78 401.86 L111.57 401.30 L110.59 400.40 L109.71 399.25 L108.75 398.14 L107.58 397.36 L106.21 397.09 L104.75 397.20 L103.31 397.39 L101.98 397.33 L100.73 396.87 L99.48 396.15 L98.16 395.49 L96.79 395.22 L95.42 395.49 L94.11 396.15 L92.85 396.87 L91.60 397.33 L90.27 397.39 L88.84 397.20 L87.37 397.09 L86.00 397.36 L84.84 398.14 L83.88 399.25 L83.00 400.40 L82.01 401.30 L80.81 401.86 L79.41 402.24 L78.01 402.70 L76.85 403.48 L76.07 404.64 L75.61 406.04 L75.24 407.43 L74.67 408.64 L73.78 409.62 L72.63 410.50 L71.51 411.46 L70.74 412.63 L70.46 414.00 L70.57 415.46 L70.76 416.90 L70.70 418.23 L70.25 419.48 L69.52 420.73 L68.86 422.05 L68.59 423.42 L68.86 424.79 L69.52 426.10 L70.25 427.36 L70.70 428.61 L70.76 429.94 L70.57 431.37 L70.46 432.84 L70.74 434.21 L71.51 435.37 L72.63 436.33 L73.78 437.21 L74.67 438.20 L75.24 439.40 L75.61 440.80 L76.07 442.20 L76.85 443.36 L78.01 444.14 L79.41 444.60 L80.81 444.97 L82.01 445.54 L83.00 446.43 L83.88 447.58 L84.84 448.70 L86.00 449.47 L87.37 449.75 L88.84 449.64 L90.27 449.45 L91.60 449.51 L92.85 449.96 L94.11 450.69 L95.42 451.35 L96.79 451.62 L98.16 451.35 L99.48 450.69 L100.73 449.96 L101.98 449.51 L103.31 449.45 L104.75 449.64 L106.21 449.75 L107.58 449.47 L108.75 448.70 L109.71 447.58 L110.59 446.43 L111.57 445.54 L112.78 444.97 L114.17 444.60 L115.57 444.14 L116.73 443.36 L117.51 442.20 L117.97 440.80 L118.35 439.40 L118.91 438.20 L119.81 437.21 L120.96 436.33 L122.07 435.37 L122.85 434.21 L123.12 432.84 L123.01 431.37 L122.82 429.94 L122.88 428.61 L123.34 427.36 L124.06 426.10 L124.72 424.79Z" fill="#f2f2f2"/></svg><div class="t" style="left:86.792px;top:417.2181px;width:20px;text-align:center;font-size:11.8px;line-height:12px;height:12px;color:#302c28">4</div><div class="t" style="left:14.6px;top:391.4px;width:10px;text-align:center;font-size:8px;color:#3b4048">4</div>
<div class="a" style="left:30px;top:473.0px;width:132px;height:73.8px;background:#f7b024;border-radius:1.2px"></div><div class="a" style="left:30px;top:473.0px;width:2.7px;height:73.8px;background:#2a1b03;border-radius:1.2px 0 0 1.2px"></div><svg style="left:0;top:0" width="1" height="1"><path d="M124.99 508.02 L124.72 506.65 L124.06 505.33 L123.34 504.08 L122.88 502.83 L122.82 501.50 L123.01 500.06 L123.12 498.60 L122.85 497.23 L122.07 496.06 L120.96 495.10 L119.81 494.22 L118.91 493.24 L118.35 492.03 L117.97 490.64 L117.51 489.24 L116.73 488.08 L115.57 487.30 L114.17 486.84 L112.78 486.46 L111.57 485.90 L110.59 485.00 L109.71 483.85 L108.75 482.74 L107.58 481.96 L106.21 481.69 L104.75 481.80 L103.31 481.99 L101.98 481.93 L100.73 481.47 L99.48 480.75 L98.16 480.09 L96.79 479.82 L95.42 480.09 L94.11 480.75 L92.85 481.47 L91.60 481.93 L90.27 481.99 L88.84 481.80 L87.37 481.69 L86.00 481.96 L84.84 482.74 L83.88 483.85 L83.00 485.00 L82.01 485.90 L80.81 486.46 L79.41 486.84 L78.01 487.30 L76.85 488.08 L76.07 489.24 L75.61 490.64 L75.24 492.03 L74.67 493.24 L73.78 494.22 L72.63 495.10 L71.51 496.06 L70.74 497.23 L70.46 498.60 L70.57 500.06 L70.76 501.50 L70.70 502.83 L70.25 504.08 L69.52 505.33 L68.86 506.65 L68.59 508.02 L68.86 509.39 L69.52 510.70 L70.25 511.96 L70.70 513.21 L70.76 514.54 L70.57 515.97 L70.46 517.44 L70.74 518.81 L71.51 519.97 L72.63 520.93 L73.78 521.81 L74.67 522.80 L75.24 524.00 L75.61 525.40 L76.07 526.80 L76.85 527.96 L78.01 528.74 L79.41 529.20 L80.81 529.57 L82.01 530.14 L83.00 531.03 L83.88 532.18 L84.84 533.30 L86.00 534.07 L87.37 534.35 L88.84 534.24 L90.27 534.05 L91.60 534.11 L92.85 534.56 L94.11 535.29 L95.42 535.95 L96.79 536.22 L98.16 535.95 L99.48 535.29 L100.73 534.56 L101.98 534.11 L103.31 534.05 L104.75 534.24 L106.21 534.35 L107.58 534.07 L108.75 533.30 L109.71 532.18 L110.59 531.03 L111.57 530.14 L112.78 529.57 L114.17 529.20 L115.57 528.74 L116.73 527.96 L117.51 526.80 L117.97 525.40 L118.35 524.00 L118.91 522.80 L119.81 521.81 L120.96 520.93 L122.07 519.97 L122.85 518.81 L123.12 517.44 L123.01 515.97 L122.82 514.54 L122.88 513.21 L123.34 511.96 L124.06 510.70 L124.72 509.39Z" fill="#f2f2f2"/></svg><div class="t" style="left:86.792px;top:501.8181px;width:20px;text-align:center;font-size:11.8px;line-height:12px;height:12px;color:#302c28">5</div><div class="t" style="left:14.6px;top:476.0px;width:10px;text-align:center;font-size:8px;color:#3b4048">5</div>
<div class="a" style="left:30px;top:557.7px;width:132px;height:1.3px;background:#f7b024;border-radius:1px 1px 0 0"></div>
<div class="a" style="left:30px;top:557.7px;width:2.7px;height:1.3px;background:#2b1a06"></div>
<div class="a" style="left:175.2px;top:133px;width:3px;height:71px;background:#c9cdd3;border-radius:1.5px"></div>
<svg style="left:87.2px;top:567.8px" width="8.4" height="8.4" viewBox="0 0 8.4 8.4"><path d="M4.2 0.3 V8.1 M0.3 4.2 H8.1" class="s" style="stroke:#33373e;stroke-width:1"/></svg>
<div class="a" style="left:182.6px;top:97px;width:1px;height:494px;background:#d8dce2"></div>
<div class="a" style="left:186.8px;top:145.2px;width:9px;height:409px;background:linear-gradient(90deg,#d9dde2,#d2d6db);border-radius:1.5px"></div>
<div class="t" style="left:186.2px;top:151.1px;width:10px;text-align:center;font-size:7px;font-weight:bold;color:#4a4f57;transform:rotate(-90deg)">9</div>
<div class="a" style="left:189.8px;top:166.4px;width:3px;height:0.8px;background:#e4e7eb"></div>
<div class="a" style="left:190.3px;top:161.1px;width:2px;height:0.7px;background:#dfe2e6"></div>
<div class="a" style="left:190.3px;top:171.8px;width:2px;height:0.7px;background:#dfe2e6"></div>
<div class="t" style="left:186.2px;top:172.5px;width:10px;text-align:center;font-size:7px;font-weight:bold;color:#4a4f57;transform:rotate(-90deg)">8</div>
<div class="a" style="left:189.8px;top:187.8px;width:3px;height:0.8px;background:#e4e7eb"></div>
<div class="a" style="left:190.3px;top:182.5px;width:2px;height:0.7px;background:#dfe2e6"></div>
<div class="a" style="left:190.3px;top:193.3px;width:2px;height:0.7px;background:#dfe2e6"></div>
<div class="t" style="left:186.2px;top:194.0px;width:10px;text-align:center;font-size:7px;font-weight:bold;color:#4a4f57;transform:rotate(-90deg)">7</div>
<div class="a" style="left:189.8px;top:209.3px;width:3px;height:0.8px;background:#e4e7eb"></div>
<div class="a" style="left:190.3px;top:204.0px;width:2px;height:0.7px;background:#dfe2e6"></div>
<div class="a" style="left:190.3px;top:214.7px;width:2px;height:0.7px;background:#dfe2e6"></div>
<div class="t" style="left:186.2px;top:215.4px;width:10px;text-align:center;font-size:7px;font-weight:bold;color:#4a4f57;transform:rotate(-90deg)">6</div>
<div class="a" style="left:189.8px;top:230.7px;width:3px;height:0.8px;background:#e4e7eb"></div>
<div class="a" style="left:190.3px;top:225.4px;width:2px;height:0.7px;background:#dfe2e6"></div>
<div class="a" style="left:190.3px;top:236.1px;width:2px;height:0.7px;background:#dfe2e6"></div>
<div class="t" style="left:186.2px;top:236.8px;width:10px;text-align:center;font-size:7px;font-weight:bold;color:#4a4f57;transform:rotate(-90deg)">5</div>
<div class="a" style="left:189.8px;top:252.1px;width:3px;height:0.8px;background:#e4e7eb"></div>
<div class="a" style="left:190.3px;top:246.8px;width:2px;height:0.7px;background:#dfe2e6"></div>
<div class="a" style="left:190.3px;top:257.5px;width:2px;height:0.7px;background:#dfe2e6"></div>
<div class="t" style="left:186.2px;top:258.2px;width:10px;text-align:center;font-size:7px;font-weight:bold;color:#4a4f57;transform:rotate(-90deg)">4</div>
<div class="a" style="left:189.8px;top:273.5px;width:3px;height:0.8px;background:#e4e7eb"></div>
<div class="a" style="left:190.3px;top:268.2px;width:2px;height:0.7px;background:#dfe2e6"></div>
<div class="a" style="left:190.3px;top:278.9px;width:2px;height:0.7px;background:#dfe2e6"></div>
<div class="t" style="left:186.2px;top:279.6px;width:10px;text-align:center;font-size:7px;font-weight:bold;color:#4a4f57;transform:rotate(-90deg)">3</div>
<div class="a" style="left:189.8px;top:294.9px;width:3px;height:0.8px;background:#e4e7eb"></div>
<div class="a" style="left:190.3px;top:289.6px;width:2px;height:0.7px;background:#dfe2e6"></div>
<div class="a" style="left:190.3px;top:300.4px;width:2px;height:0.7px;background:#dfe2e6"></div>
<div class="t" style="left:186.2px;top:301.1px;width:10px;text-align:center;font-size:7px;font-weight:bold;color:#4a4f57;transform:rotate(-90deg)">2</div>
<div class="a" style="left:189.8px;top:316.4px;width:3px;height:0.8px;background:#e4e7eb"></div>
<div class="a" style="left:190.3px;top:311.1px;width:2px;height:0.7px;background:#dfe2e6"></div>
<div class="a" style="left:190.3px;top:321.8px;width:2px;height:0.7px;background:#dfe2e6"></div>
<div class="t" style="left:186.2px;top:322.5px;width:10px;text-align:center;font-size:7px;font-weight:bold;color:#4a4f57;transform:rotate(-90deg)">1</div>
<div class="a" style="left:189.8px;top:337.8px;width:3px;height:0.8px;background:#e4e7eb"></div>
<div class="a" style="left:190.3px;top:332.5px;width:2px;height:0.7px;background:#dfe2e6"></div>
<div class="a" style="left:190.3px;top:343.2px;width:2px;height:0.7px;background:#dfe2e6"></div>
<div class="t" style="left:186.2px;top:343.9px;width:10px;text-align:center;font-size:7px;font-weight:bold;color:#4a4f57;transform:rotate(-90deg)">0</div>
<div class="a" style="left:189.8px;top:359.2px;width:3px;height:0.8px;background:#e4e7eb"></div>
<div class="a" style="left:190.3px;top:353.9px;width:2px;height:0.7px;background:#dfe2e6"></div>
<div class="a" style="left:190.3px;top:364.6px;width:2px;height:0.7px;background:#dfe2e6"></div>
<div class="t" style="left:186.2px;top:365.3px;width:10px;text-align:center;font-size:7px;font-weight:bold;color:#4a4f57;transform:rotate(-90deg)">1</div>
<div class="a" style="left:189.8px;top:380.6px;width:3px;height:0.8px;background:#e4e7eb"></div>
<div class="a" style="left:190.3px;top:375.3px;width:2px;height:0.7px;background:#dfe2e6"></div>
<div class="a" style="left:190.3px;top:386.0px;width:2px;height:0.7px;background:#dfe2e6"></div>
<div class="t" style="left:186.2px;top:386.7px;width:10px;text-align:center;font-size:7px;font-weight:bold;color:#4a4f57;transform:rotate(-90deg)">2</div>
<div class="a" style="left:189.8px;top:402.1px;width:3px;height:0.8px;background:#e4e7eb"></div>
<div class="a" style="left:190.3px;top:396.7px;width:2px;height:0.7px;background:#dfe2e6"></div>
<div class="a" style="left:190.3px;top:407.5px;width:2px;height:0.7px;background:#dfe2e6"></div>
<div class="t" style="left:186.2px;top:408.2px;width:10px;text-align:center;font-size:7px;font-weight:bold;color:#4a4f57;transform:rotate(-90deg)">3</div>
<div class="a" style="left:189.8px;top:423.5px;width:3px;height:0.8px;background:#e4e7eb"></div>
<div class="a" style="left:190.3px;top:418.2px;width:2px;height:0.7px;background:#dfe2e6"></div>
<div class="a" style="left:190.3px;top:428.9px;width:2px;height:0.7px;background:#dfe2e6"></div>
<div class="t" style="left:186.2px;top:429.6px;width:10px;text-align:center;font-size:7px;font-weight:bold;color:#4a4f57;transform:rotate(-90deg)">4</div>
<div class="a" style="left:189.8px;top:444.9px;width:3px;height:0.8px;background:#e4e7eb"></div>
<div class="a" style="left:190.3px;top:439.6px;width:2px;height:0.7px;background:#dfe2e6"></div>
<div class="a" style="left:190.3px;top:450.3px;width:2px;height:0.7px;background:#dfe2e6"></div>
<div class="t" style="left:186.2px;top:451.0px;width:10px;text-align:center;font-size:7px;font-weight:bold;color:#4a4f57;transform:rotate(-90deg)">5</div>
<div class="a" style="left:189.8px;top:466.3px;width:3px;height:0.8px;background:#e4e7eb"></div>
<div class="a" style="left:190.3px;top:461.0px;width:2px;height:0.7px;background:#dfe2e6"></div>
<div class="a" style="left:190.3px;top:471.7px;width:2px;height:0.7px;background:#dfe2e6"></div>
<div class="t" style="left:186.2px;top:472.4px;width:10px;text-align:center;font-size:7px;font-weight:bold;color:#4a4f57;transform:rotate(-90deg)">6</div>
<div class="a" style="left:189.8px;top:487.7px;width:3px;height:0.8px;background:#e4e7eb"></div>
<div class="a" style="left:190.3px;top:482.4px;width:2px;height:0.7px;background:#dfe2e6"></div>
<div class="a" style="left:190.3px;top:493.1px;width:2px;height:0.7px;background:#dfe2e6"></div>
<div class="t" style="left:186.2px;top:493.8px;width:10px;text-align:center;font-size:7px;font-weight:bold;color:#4a4f57;transform:rotate(-90deg)">7</div>
<div class="a" style="left:189.8px;top:509.1px;width:3px;height:0.8px;background:#e4e7eb"></div>
<div class="a" style="left:190.3px;top:503.8px;width:2px;height:0.7px;background:#dfe2e6"></div>
<div class="a" style="left:190.3px;top:514.6px;width:2px;height:0.7px;background:#dfe2e6"></div>
<div class="t" style="left:186.2px;top:515.3px;width:10px;text-align:center;font-size:7px;font-weight:bold;color:#4a4f57;transform:rotate(-90deg)">8</div>
<div class="a" style="left:189.8px;top:530.6px;width:3px;height:0.8px;background:#e4e7eb"></div>
<div class="a" style="left:190.3px;top:525.3px;width:2px;height:0.7px;background:#dfe2e6"></div>
<div class="a" style="left:190.3px;top:536.0px;width:2px;height:0.7px;background:#dfe2e6"></div>
<div class="t" style="left:186.2px;top:536.7px;width:10px;text-align:center;font-size:7px;font-weight:bold;color:#4a4f57;transform:rotate(-90deg)">9</div>
<div class="a" style="left:190.3px;top:546.7px;width:2px;height:0.7px;background:#dfe2e6"></div>
<div class="a" style="left:254.8px;top:99.7px;width:725.6px;height:9.6px;background:linear-gradient(#dce0e5,#d1d5da);border-radius:1.5px"></div>
<div class="a" style="left:263.8px;top:103.8px;width:0.8px;height:3px;background:#e4e7eb"></div>
<div class="a" style="left:258.5px;top:104.4px;width:0.7px;height:2px;background:#dfe2e6"></div>
<div class="a" style="left:269.2px;top:104.4px;width:0.7px;height:2px;background:#dfe2e6"></div>
<div class="t" style="left:266.9px;top:100.9px;width:16px;text-align:center;font-size:6.3px;font-weight:bold;color:#3a3f46">16</div>
<div class="a" style="left:285.2px;top:103.8px;width:0.8px;height:3px;background:#e4e7eb"></div>
<div class="a" style="left:279.9px;top:104.4px;width:0.7px;height:2px;background:#dfe2e6"></div>
<div class="a" style="left:290.6px;top:104.4px;width:0.7px;height:2px;background:#dfe2e6"></div>
<div class="t" style="left:288.3px;top:100.9px;width:16px;text-align:center;font-size:6.3px;font-weight:bold;color:#3a3f46">15</div>
<div class="a" style="left:306.6px;top:103.8px;width:0.8px;height:3px;background:#e4e7eb"></div>
<div class="a" style="left:301.3px;top:104.4px;width:0.7px;height:2px;background:#dfe2e6"></div>
<div class="a" style="left:312.0px;top:104.4px;width:0.7px;height:2px;background:#dfe2e6"></div>
<div class="t" style="left:309.7px;top:100.9px;width:16px;text-align:center;font-size:6.3px;font-weight:bold;color:#3a3f46">14</div>
<div class="a" style="left:328.0px;top:103.8px;width:0.8px;height:3px;background:#e4e7eb"></div>
<div class="a" style="left:322.7px;top:104.4px;width:0.7px;height:2px;background:#dfe2e6"></div>
<div class="a" style="left:333.4px;top:104.4px;width:0.7px;height:2px;background:#dfe2e6"></div>
<div class="t" style="left:331.1px;top:100.9px;width:16px;text-align:center;font-size:6.3px;font-weight:bold;color:#3a3f46">13</div>
<div class="a" style="left:349.4px;top:103.8px;width:0.8px;height:3px;background:#e4e7eb"></div>
<div class="a" style="left:344.1px;top:104.4px;width:0.7px;height:2px;background:#dfe2e6"></div>
<div class="a" style="left:354.9px;top:104.4px;width:0.7px;height:2px;background:#dfe2e6"></div>
<div class="t" style="left:352.6px;top:100.9px;width:16px;text-align:center;font-size:6.3px;font-weight:bold;color:#3a3f46">12</div>
<div class="a" style="left:370.9px;top:103.8px;width:0.8px;height:3px;background:#e4e7eb"></div>
<div class="a" style="left:365.6px;top:104.4px;width:0.7px;height:2px;background:#dfe2e6"></div>
<div class="a" style="left:376.3px;top:104.4px;width:0.7px;height:2px;background:#dfe2e6"></div>
<div class="t" style="left:374.0px;top:100.9px;width:16px;text-align:center;font-size:6.3px;font-weight:bold;color:#3a3f46">11</div>
<div class="a" style="left:392.3px;top:103.8px;width:0.8px;height:3px;background:#e4e7eb"></div>
<div class="a" style="left:387.0px;top:104.4px;width:0.7px;height:2px;background:#dfe2e6"></div>
<div class="a" style="left:397.7px;top:104.4px;width:0.7px;height:2px;background:#dfe2e6"></div>
<div class="t" style="left:395.4px;top:100.9px;width:16px;text-align:center;font-size:6.3px;font-weight:bold;color:#3a3f46">10</div>
<div class="a" style="left:413.7px;top:103.8px;width:0.8px;height:3px;background:#e4e7eb"></div>
<div class="a" style="left:408.4px;top:104.4px;width:0.7px;height:2px;background:#dfe2e6"></div>
<div class="a" style="left:419.1px;top:104.4px;width:0.7px;height:2px;background:#dfe2e6"></div>
<div class="t" style="left:416.8px;top:100.9px;width:16px;text-align:center;font-size:6.3px;font-weight:bold;color:#3a3f46">9</div>
<div class="a" style="left:435.1px;top:103.8px;width:0.8px;height:3px;background:#e4e7eb"></div>
<div class="a" style="left:429.8px;top:104.4px;width:0.7px;height:2px;background:#dfe2e6"></div>
<div class="a" style="left:440.5px;top:104.4px;width:0.7px;height:2px;background:#dfe2e6"></div>
<div class="t" style="left:438.2px;top:100.9px;width:16px;text-align:center;font-size:6.3px;font-weight:bold;color:#3a3f46">8</div>
<div class="a" style="left:456.6px;top:103.8px;width:0.8px;height:3px;background:#e4e7eb"></div>
<div class="a" style="left:451.2px;top:104.4px;width:0.7px;height:2px;background:#dfe2e6"></div>
<div class="a" style="left:462.0px;top:104.4px;width:0.7px;height:2px;background:#dfe2e6"></div>
<div class="t" style="left:459.7px;top:100.9px;width:16px;text-align:center;font-size:6.3px;font-weight:bold;color:#3a3f46">7</div>
<div class="a" style="left:478.0px;top:103.8px;width:0.8px;height:3px;background:#e4e7eb"></div>
<div class="a" style="left:472.7px;top:104.4px;width:0.7px;height:2px;background:#dfe2e6"></div>
<div class="a" style="left:483.4px;top:104.4px;width:0.7px;height:2px;background:#dfe2e6"></div>
<div class="t" style="left:481.1px;top:100.9px;width:16px;text-align:center;font-size:6.3px;font-weight:bold;color:#3a3f46">6</div>
<div class="a" style="left:499.4px;top:103.8px;width:0.8px;height:3px;background:#e4e7eb"></div>
<div class="a" style="left:494.1px;top:104.4px;width:0.7px;height:2px;background:#dfe2e6"></div>
<div class="a" style="left:504.8px;top:104.4px;width:0.7px;height:2px;background:#dfe2e6"></div>
<div class="t" style="left:502.5px;top:100.9px;width:16px;text-align:center;font-size:6.3px;font-weight:bold;color:#3a3f46">5</div>
<div class="a" style="left:520.8px;top:103.8px;width:0.8px;height:3px;background:#e4e7eb"></div>
<div class="a" style="left:515.5px;top:104.4px;width:0.7px;height:2px;background:#dfe2e6"></div>
<div class="a" style="left:526.2px;top:104.4px;width:0.7px;height:2px;background:#dfe2e6"></div>
<div class="t" style="left:523.9px;top:100.9px;width:16px;text-align:center;font-size:6.3px;font-weight:bold;color:#3a3f46">4</div>
<div class="a" style="left:542.2px;top:103.8px;width:0.8px;height:3px;background:#e4e7eb"></div>
<div class="a" style="left:536.9px;top:104.4px;width:0.7px;height:2px;background:#dfe2e6"></div>
<div class="a" style="left:547.6px;top:104.4px;width:0.7px;height:2px;background:#dfe2e6"></div>
<div class="t" style="left:545.3px;top:100.9px;width:16px;text-align:center;font-size:6.3px;font-weight:bold;color:#3a3f46">3</div>
<div class="a" style="left:563.7px;top:103.8px;width:0.8px;height:3px;background:#e4e7eb"></div>
<div class="a" style="left:558.3px;top:104.4px;width:0.7px;height:2px;background:#dfe2e6"></div>
<div class="a" style="left:569.1px;top:104.4px;width:0.7px;height:2px;background:#dfe2e6"></div>
<div class="t" style="left:566.8px;top:100.9px;width:16px;text-align:center;font-size:6.3px;font-weight:bold;color:#3a3f46">2</div>
<div class="a" style="left:585.1px;top:103.8px;width:0.8px;height:3px;background:#e4e7eb"></div>
<div class="a" style="left:579.8px;top:104.4px;width:0.7px;height:2px;background:#dfe2e6"></div>
<div class="a" style="left:590.5px;top:104.4px;width:0.7px;height:2px;background:#dfe2e6"></div>
<div class="t" style="left:588.2px;top:100.9px;width:16px;text-align:center;font-size:6.3px;font-weight:bold;color:#3a3f46">1</div>
<div class="a" style="left:606.5px;top:103.8px;width:0.8px;height:3px;background:#e4e7eb"></div>
<div class="a" style="left:601.2px;top:104.4px;width:0.7px;height:2px;background:#dfe2e6"></div>
<div class="a" style="left:611.9px;top:104.4px;width:0.7px;height:2px;background:#dfe2e6"></div>
<div class="t" style="left:609.6px;top:100.9px;width:16px;text-align:center;font-size:6.3px;font-weight:bold;color:#3a3f46">0</div>
<div class="a" style="left:627.9px;top:103.8px;width:0.8px;height:3px;background:#e4e7eb"></div>
<div class="a" style="left:622.6px;top:104.4px;width:0.7px;height:2px;background:#dfe2e6"></div>
<div class="a" style="left:633.3px;top:104.4px;width:0.7px;height:2px;background:#dfe2e6"></div>
<div class="t" style="left:631.0px;top:100.9px;width:16px;text-align:center;font-size:6.3px;font-weight:bold;color:#3a3f46">1</div>
<div class="a" style="left:649.3px;top:103.8px;width:0.8px;height:3px;background:#e4e7eb"></div>
<div class="a" style="left:644.0px;top:104.4px;width:0.7px;height:2px;background:#dfe2e6"></div>
<div class="a" style="left:654.7px;top:104.4px;width:0.7px;height:2px;background:#dfe2e6"></div>
<div class="t" style="left:652.4px;top:100.9px;width:16px;text-align:center;font-size:6.3px;font-weight:bold;color:#3a3f46">2</div>
<div class="a" style="left:670.8px;top:103.8px;width:0.8px;height:3px;background:#e4e7eb"></div>
<div class="a" style="left:665.4px;top:104.4px;width:0.7px;height:2px;background:#dfe2e6"></div>
<div class="a" style="left:676.2px;top:104.4px;width:0.7px;height:2px;background:#dfe2e6"></div>
<div class="t" style="left:673.9px;top:100.9px;width:16px;text-align:center;font-size:6.3px;font-weight:bold;color:#3a3f46">3</div>
<div class="a" style="left:692.2px;top:103.8px;width:0.8px;height:3px;background:#e4e7eb"></div>
<div class="a" style="left:686.9px;top:104.4px;width:0.7px;height:2px;background:#dfe2e6"></div>
<div class="a" style="left:697.6px;top:104.4px;width:0.7px;height:2px;background:#dfe2e6"></div>
<div class="t" style="left:695.3px;top:100.9px;width:16px;text-align:center;font-size:6.3px;font-weight:bold;color:#3a3f46">4</div>
<div class="a" style="left:713.6px;top:103.8px;width:0.8px;height:3px;background:#e4e7eb"></div>
<div class="a" style="left:708.3px;top:104.4px;width:0.7px;height:2px;background:#dfe2e6"></div>
<div class="a" style="left:719.0px;top:104.4px;width:0.7px;height:2px;background:#dfe2e6"></div>
<div class="t" style="left:716.7px;top:100.9px;width:16px;text-align:center;font-size:6.3px;font-weight:bold;color:#3a3f46">5</div>
<div class="a" style="left:735.0px;top:103.8px;width:0.8px;height:3px;background:#e4e7eb"></div>
<div class="a" style="left:729.7px;top:104.4px;width:0.7px;height:2px;background:#dfe2e6"></div>
<div class="a" style="left:740.4px;top:104.4px;width:0.7px;height:2px;background:#dfe2e6"></div>
<div class="t" style="left:738.1px;top:100.9px;width:16px;text-align:center;font-size:6.3px;font-weight:bold;color:#3a3f46">6</div>
<div class="a" style="left:756.4px;top:103.8px;width:0.8px;height:3px;background:#e4e7eb"></div>
<div class="a" style="left:751.1px;top:104.4px;width:0.7px;height:2px;background:#dfe2e6"></div>
<div class="a" style="left:761.8px;top:104.4px;width:0.7px;height:2px;background:#dfe2e6"></div>
<div class="t" style="left:759.5px;top:100.9px;width:16px;text-align:center;font-size:6.3px;font-weight:bold;color:#3a3f46">7</div>
<div class="a" style="left:777.9px;top:103.8px;width:0.8px;height:3px;background:#e4e7eb"></div>
<div class="a" style="left:772.5px;top:104.4px;width:0.7px;height:2px;background:#dfe2e6"></div>
<div class="a" style="left:783.3px;top:104.4px;width:0.7px;height:2px;background:#dfe2e6"></div>
<div class="t" style="left:781.0px;top:100.9px;width:16px;text-align:center;font-size:6.3px;font-weight:bold;color:#3a3f46">8</div>
<div class="a" style="left:799.3px;top:103.8px;width:0.8px;height:3px;background:#e4e7eb"></div>
<div class="a" style="left:794.0px;top:104.4px;width:0.7px;height:2px;background:#dfe2e6"></div>
<div class="a" style="left:804.7px;top:104.4px;width:0.7px;height:2px;background:#dfe2e6"></div>
<div class="t" style="left:802.4px;top:100.9px;width:16px;text-align:center;font-size:6.3px;font-weight:bold;color:#3a3f46">9</div>
<div class="a" style="left:820.7px;top:103.8px;width:0.8px;height:3px;background:#e4e7eb"></div>
<div class="a" style="left:815.4px;top:104.4px;width:0.7px;height:2px;background:#dfe2e6"></div>
<div class="a" style="left:826.1px;top:104.4px;width:0.7px;height:2px;background:#dfe2e6"></div>
<div class="t" style="left:823.8px;top:100.9px;width:16px;text-align:center;font-size:6.3px;font-weight:bold;color:#3a3f46">10</div>
<div class="a" style="left:842.1px;top:103.8px;width:0.8px;height:3px;background:#e4e7eb"></div>
<div class="a" style="left:836.8px;top:104.4px;width:0.7px;height:2px;background:#dfe2e6"></div>
<div class="a" style="left:847.5px;top:104.4px;width:0.7px;height:2px;background:#dfe2e6"></div>
<div class="t" style="left:845.2px;top:100.9px;width:16px;text-align:center;font-size:6.3px;font-weight:bold;color:#3a3f46">11</div>
<div class="a" style="left:863.5px;top:103.8px;width:0.8px;height:3px;background:#e4e7eb"></div>
<div class="a" style="left:858.2px;top:104.4px;width:0.7px;height:2px;background:#dfe2e6"></div>
<div class="a" style="left:868.9px;top:104.4px;width:0.7px;height:2px;background:#dfe2e6"></div>
<div class="t" style="left:866.6px;top:100.9px;width:16px;text-align:center;font-size:6.3px;font-weight:bold;color:#3a3f46">12</div>
<div class="a" style="left:885.0px;top:103.8px;width:0.8px;height:3px;background:#e4e7eb"></div>
<div class="a" style="left:879.6px;top:104.4px;width:0.7px;height:2px;background:#dfe2e6"></div>
<div class="a" style="left:890.4px;top:104.4px;width:0.7px;height:2px;background:#dfe2e6"></div>
<div class="t" style="left:888.1px;top:100.9px;width:16px;text-align:center;font-size:6.3px;font-weight:bold;color:#3a3f46">13</div>
<div class="a" style="left:906.4px;top:103.8px;width:0.8px;height:3px;background:#e4e7eb"></div>
<div class="a" style="left:901.1px;top:104.4px;width:0.7px;height:2px;background:#dfe2e6"></div>
<div class="a" style="left:911.8px;top:104.4px;width:0.7px;height:2px;background:#dfe2e6"></div>
<div class="t" style="left:909.5px;top:100.9px;width:16px;text-align:center;font-size:6.3px;font-weight:bold;color:#3a3f46">14</div>
<div class="a" style="left:927.8px;top:103.8px;width:0.8px;height:3px;background:#e4e7eb"></div>
<div class="a" style="left:922.5px;top:104.4px;width:0.7px;height:2px;background:#dfe2e6"></div>
<div class="a" style="left:933.2px;top:104.4px;width:0.7px;height:2px;background:#dfe2e6"></div>
<div class="t" style="left:930.9px;top:100.9px;width:16px;text-align:center;font-size:6.3px;font-weight:bold;color:#3a3f46">15</div>
<div class="a" style="left:949.2px;top:103.8px;width:0.8px;height:3px;background:#e4e7eb"></div>
<div class="a" style="left:943.9px;top:104.4px;width:0.7px;height:2px;background:#dfe2e6"></div>
<div class="a" style="left:954.6px;top:104.4px;width:0.7px;height:2px;background:#dfe2e6"></div>
<div class="t" style="left:952.3px;top:100.9px;width:16px;text-align:center;font-size:6.3px;font-weight:bold;color:#3a3f46">16</div>
<div class="a" style="left:970.6px;top:103.8px;width:0.8px;height:3px;background:#e4e7eb"></div>
<div class="a" style="left:965.3px;top:104.4px;width:0.7px;height:2px;background:#dfe2e6"></div>
<div class="a" style="left:976.0px;top:104.4px;width:0.7px;height:2px;background:#dfe2e6"></div>
<div class="a" style="left:255.6px;top:123.8px;width:16.4px;height:17.2px;background:#fff;border-radius:1.5px"></div>
<svg style="left:259px;top:128px" width="10" height="7.6" viewBox="0 0 20 15"><path d="M7 0.3 H12.6 L6.4 14.7 H0.4 Z" fill="url(#ai1)"/><path d="M10 6.2 L14.2 6.2 L19.8 14.7 H13.8 Z" fill="url(#ai2)"/></svg>
<div class="a" style="left:254.8px;top:145.6px;width:725.6px;height:408.1px;background:#f7b024"></div>
<div class="a" style="left:254.8px;top:145.6px;width:17.2px;height:408.1px;background:#2a1b03"></div>
<svg style="left:0;top:0" width="1" height="1"><path d="M777.80 339.20 L777.56 336.15 L776.88 333.11 L775.80 330.13 L774.43 327.20 L772.87 324.34 L771.26 321.53 L769.72 318.77 L768.38 316.02 L767.31 313.25 L766.57 310.44 L766.18 307.57 L766.11 304.60 L766.30 301.55 L766.66 298.40 L767.07 295.19 L767.41 291.95 L767.57 288.72 L767.42 285.55 L766.89 282.49 L765.94 279.58 L764.55 276.85 L762.76 274.31 L760.62 271.96 L758.23 269.79 L755.70 267.74 L753.14 265.76 L750.66 263.79 L748.36 261.76 L746.32 259.62 L744.56 257.31 L743.10 254.80 L741.90 252.09 L740.91 249.19 L740.03 246.15 L739.19 243.03 L738.26 239.90 L737.17 236.86 L735.82 233.99 L734.16 231.36 L732.17 229.03 L729.84 227.04 L727.21 225.38 L724.34 224.03 L721.30 222.94 L718.17 222.01 L715.05 221.17 L712.01 220.29 L709.11 219.30 L706.40 218.10 L703.89 216.64 L701.58 214.88 L699.44 212.84 L697.41 210.54 L695.44 208.06 L693.46 205.50 L691.41 202.97 L689.24 200.58 L686.89 198.44 L684.35 196.65 L681.62 195.26 L678.71 194.31 L675.65 193.78 L672.48 193.63 L669.25 193.79 L666.01 194.13 L662.80 194.54 L659.65 194.90 L656.60 195.09 L653.63 195.02 L650.76 194.63 L647.95 193.89 L645.18 192.82 L642.43 191.48 L639.67 189.94 L636.86 188.33 L634.00 186.77 L631.07 185.40 L628.09 184.32 L625.05 183.64 L622.00 183.40 L618.95 183.64 L615.91 184.32 L612.93 185.40 L610.00 186.77 L607.14 188.33 L604.33 189.94 L601.57 191.48 L598.82 192.82 L596.05 193.89 L593.24 194.63 L590.37 195.02 L587.40 195.09 L584.35 194.90 L581.20 194.54 L577.99 194.13 L574.75 193.79 L571.52 193.63 L568.35 193.78 L565.29 194.31 L562.38 195.26 L559.65 196.65 L557.11 198.44 L554.76 200.58 L552.59 202.97 L550.54 205.50 L548.56 208.06 L546.59 210.54 L544.56 212.84 L542.42 214.88 L540.11 216.64 L537.60 218.10 L534.89 219.30 L531.99 220.29 L528.95 221.17 L525.83 222.01 L522.70 222.94 L519.66 224.03 L516.79 225.38 L514.16 227.04 L511.83 229.03 L509.84 231.36 L508.18 233.99 L506.83 236.86 L505.74 239.90 L504.81 243.03 L503.97 246.15 L503.09 249.19 L502.10 252.09 L500.90 254.80 L499.44 257.31 L497.68 259.62 L495.64 261.76 L493.34 263.79 L490.86 265.76 L488.30 267.74 L485.77 269.79 L483.38 271.96 L481.24 274.31 L479.45 276.85 L478.06 279.58 L477.11 282.49 L476.58 285.55 L476.43 288.72 L476.59 291.95 L476.93 295.19 L477.34 298.40 L477.70 301.55 L477.89 304.60 L477.82 307.57 L477.43 310.44 L476.69 313.25 L475.62 316.02 L474.28 318.77 L472.74 321.53 L471.13 324.34 L469.57 327.20 L468.20 330.13 L467.12 333.11 L466.44 336.15 L466.20 339.20 L466.44 342.25 L467.12 345.29 L468.20 348.27 L469.57 351.20 L471.13 354.06 L472.74 356.87 L474.28 359.63 L475.62 362.38 L476.69 365.15 L477.43 367.96 L477.82 370.83 L477.89 373.80 L477.70 376.85 L477.34 380.00 L476.93 383.21 L476.59 386.45 L476.43 389.68 L476.58 392.85 L477.11 395.91 L478.06 398.82 L479.45 401.55 L481.24 404.09 L483.38 406.44 L485.77 408.61 L488.30 410.66 L490.86 412.64 L493.34 414.61 L495.64 416.64 L497.68 418.78 L499.44 421.09 L500.90 423.60 L502.10 426.31 L503.09 429.21 L503.97 432.25 L504.81 435.37 L505.74 438.50 L506.83 441.54 L508.18 444.41 L509.84 447.04 L511.83 449.37 L514.16 451.36 L516.79 453.02 L519.66 454.37 L522.70 455.46 L525.83 456.39 L528.95 457.23 L531.99 458.11 L534.89 459.10 L537.60 460.30 L540.11 461.76 L542.42 463.52 L544.56 465.56 L546.59 467.86 L548.56 470.34 L550.54 472.90 L552.59 475.43 L554.76 477.82 L557.11 479.96 L559.65 481.75 L562.38 483.14 L565.29 484.09 L568.35 484.62 L571.52 484.77 L574.75 484.61 L577.99 484.27 L581.20 483.86 L584.35 483.50 L587.40 483.31 L590.37 483.38 L593.24 483.77 L596.05 484.51 L598.82 485.58 L601.57 486.92 L604.33 488.46 L607.14 490.07 L610.00 491.63 L612.93 493.00 L615.91 494.08 L618.95 494.76 L622.00 495.00 L625.05 494.76 L628.09 494.08 L631.07 493.00 L634.00 491.63 L636.86 490.07 L639.67 488.46 L642.43 486.92 L645.18 485.58 L647.95 484.51 L650.76 483.77 L653.63 483.38 L656.60 483.31 L659.65 483.50 L662.80 483.86 L666.01 484.27 L669.25 484.61 L672.48 484.77 L675.65 484.62 L678.71 484.09 L681.62 483.14 L684.35 481.75 L686.89 479.96 L689.24 477.82 L691.41 475.43 L693.46 472.90 L695.44 470.34 L697.41 467.86 L699.44 465.56 L701.58 463.52 L703.89 461.76 L706.40 460.30 L709.11 459.10 L712.01 458.11 L715.05 457.23 L718.17 456.39 L721.30 455.46 L724.34 454.37 L727.21 453.02 L729.84 451.36 L732.17 449.37 L734.16 447.04 L735.82 444.41 L737.17 441.54 L738.26 438.50 L739.19 435.37 L740.03 432.25 L740.91 429.21 L741.90 426.31 L743.10 423.60 L744.56 421.09 L746.32 418.78 L748.36 416.64 L750.66 414.61 L753.14 412.64 L755.70 410.66 L758.23 408.61 L760.62 406.44 L762.76 404.09 L764.55 401.55 L765.94 398.82 L766.89 395.91 L767.42 392.85 L767.57 389.68 L767.41 386.45 L767.07 383.21 L766.66 380.00 L766.30 376.85 L766.11 373.80 L766.18 370.83 L766.57 367.96 L767.31 365.15 L768.38 362.38 L769.72 359.63 L771.26 356.87 L772.87 354.06 L774.43 351.20 L775.80 348.27 L776.88 345.29 L777.56 342.25Z" fill="#f2f2f2"/></svg>
<svg style="left:0;top:0" width="1" height="1"><text x="624" y="360.1" font-size="67" text-anchor="middle" fill="#2a1b03" font-family="'Liberation Sans',sans-serif">1</text></svg>
<div class="a" style="left:386px;top:500.6px;width:480px;height:45.2px;border:1px dotted #c48a1e"></div>
<div class="t" style="left:542.9px;top:506.2px;--w:18.15px;font-family:'Liberation Serif','Noto Serif CJK SC',serif;font-weight:bold;font-size:14px;line-height:16px;height:16px;color:#2a1b03"><i>单</i><i>击</i><i>此</i><i>处</i><i>添</i><i>加</i><i>副</i><i>标</i><i>题</i></div>
<svg style="left:1035.8px;top:101.2px" width="3.6" height="2.8" viewBox="0 0 4 3"><path d="M2 0 L4 3 H0 Z" fill="#6b7078"/></svg>
<div class="a" style="left:1035.1px;top:110.8px;width:4.8px;height:30px;background:#cbcfd5;border-radius:2.4px"></div>
<svg style="left:1035.8px;top:539.2px" width="3.6" height="2.8" viewBox="0 0 4 3"><path d="M2 3 L4 0 H0 Z" fill="#6b7078"/></svg>
<svg style="left:1035.8px;top:549.4px" width="3.6" height="4.6" viewBox="0 0 4 5"><path d="M2 0 L4 2.2 H0 Z M2 2.6 L4 4.8 H0 Z" fill="#6b7078"/></svg>
<svg style="left:1035.8px;top:558.6px" width="3.6" height="4.6" viewBox="0 0 4 5"><path d="M2 2.2 L4 0 H0 Z M2 4.8 L4 2.6 H0 Z" fill="#6b7078"/></svg>
<div class="a" style="left:183px;top:568.8px;width:860px;height:1px;background:#d8dce2"></div>
<div class="t" style="left:191.2px;top:575px;font-size:8.6px;--k:r;color:#8d9199"><i>单</i><i>击</i><i>此</i><i>处</i><i>添</i><i>加</i><i>备</i><i>注</i></div>
<div class="a" style="left:263.8px;top:572.6px;width:53.4px;height:14.2px;border-radius:2.5px;background:#eff2f5"></div>
<svg style="left:267.2px;top:576px" width="8" height="8" viewBox="0 0 8 8"><path d="M0.5 0.8 H7.5 V5.4 H4.6 L3.2 7 V5.4 H0.5 Z" class="s" style="stroke-width:0.7;stroke:#555a62"/><path d="M2 2.6 H6 M2 4 H4.6" class="s" style="stroke-width:0.6;stroke:#555a62"/></svg>
<div class="t" style="left:278.4px;top:575px;font-size:8.2px;--k:r;color:#4d525a">AI <i>演</i><i>讲</i><i>稿</i></div>
<div class="a" style="left:1043.2px;top:97px;width:1px;height:494px;background:#cdd1d7"></div>
<div class="a" style="left:1057px;top:113.4px;width:8px;height:1px;background:#4a4f57"></div>
<svg style="left:1056.4px;top:126.6px" width="10" height="10" viewBox="0 0 10 10"><path d="M0.4 2.4 H1.6 M5 2.4 H9.6 M0.4 7.6 H5 M8.6 7.6 H9.6" class="s" style="stroke-width:0.9"/><circle cx="3.3" cy="2.4" r="1.7" class="s" style="stroke-width:0.9"/><circle cx="6.8" cy="7.6" r="1.7" class="s" style="stroke-width:0.9"/></svg>
<div class="t" style="left:1053.6px;top:139.2px;font-size:7.7px;color:#2d3138"><i>属</i><i>性</i></div>
<svg style="left:1056.4px;top:161.2px" width="10" height="10" viewBox="0 0 10 10"><path d="M5 0.6 L6.4 3.6 L9.6 4 L7.2 6.2 L7.8 9.4 L5 7.8 L2.2 9.4 L2.8 6.2 L0.4 4 L3.6 3.6 Z" class="s" style="stroke-width:0.9"/></svg>
<div class="t" style="left:1053.6px;top:173.79999999999998px;font-size:7.7px;color:#2d3138"><i>动</i><i>画</i></div>
<svg style="left:1056.4px;top:194.2px" width="10" height="10" viewBox="0 0 10 10"><rect x="0.6" y="0.6" width="6" height="5.4" rx="0.8" class="s" style="stroke-width:0.9"/><rect x="3.6" y="4" width="6" height="5.4" rx="0.8" class="s" style="stroke-width:0.9" fill="#e2e9f0"/></svg>
<div class="t" style="left:1053.6px;top:206.79999999999998px;font-size:7.7px;color:#2d3138"><i>切</i><i>换</i></div>
<svg style="left:1056.4px;top:228px" width="10" height="10" viewBox="0 0 10 10"><path d="M1 1.4 L2.2 0.6 L8.6 7.8 L7.6 9.2 Z" class="s" style="stroke-width:0.9"/><path d="M6.4 1.8 L7.4 0.4 L8.2 1.8 L9.6 2.4 L8.2 3 L7.4 4.4 L6.8 3 L5.4 2.4 Z" fill="#3b4048"/><path d="M1.6 6.6 L2.2 5.6 L2.8 6.6 L3.8 7.2 L2.8 7.8 L2.2 8.8 L1.6 7.8 L0.6 7.2 Z" fill="#3b4048"/></svg>
<div class="t" style="left:1053.6px;top:240.6px;font-size:7.7px;color:#2d3138"><i>美</i><i>化</i></div>
<svg style="left:1056.4px;top:261.8px" width="10" height="10" viewBox="0 0 10 10"><path d="M3.4 0.6 Q5 2 6.6 0.6 L9.4 2.4 L8.2 4.6 L7.2 4 V9.4 H2.8 V4 L1.8 4.6 L0.6 2.4 Z" class="s" style="stroke-width:0.9"/><circle cx="7" cy="7" r="1.8" fill="#e2e9f0" class="s" style="stroke-width:0.8"/></svg>
<div class="t" style="left:1053.6px;top:274.40000000000003px;font-size:7.7px;color:#2d3138"><i>主</i><i>题</i></div>
<svg style="left:1056.4px;top:295.6px" width="10" height="10" viewBox="0 0 10 10"><path d="M1.8 9.2 H8.2 Q9.4 9.2 9.4 8 V4.2 Q9.4 1 5.8 0.8 H4.2 Q1.4 1 1.2 3.2 Q0.6 3.6 0.6 4.6 V8 Q0.6 9.2 1.8 9.2 Z" class="s" style="stroke-width:0.9"/><path d="M3 7.4 V4.6 M4.6 7.4 V3.4 M6.2 7.6 Q8 6.4 7.4 4.2 M6.2 7.6 L5.8 5.4" class="s" style="stroke-width:0.8"/></svg>
<div class="t" style="left:1053.6px;top:308.20000000000005px;font-size:7.7px;color:#2d3138"><i>素</i><i>材</i></div>
<svg style="left:1056.4px;top:329.4px" width="10" height="10" viewBox="0 0 10 10"><path d="M0.6 1.6 L3.6 0.6 L6.4 1.6 L9.4 0.6 V5 M0.6 1.6 V9 L3.6 8 L5.4 8.6 M3.6 0.6 V8" class="s" style="stroke-width:0.9"/><circle cx="7.4" cy="7.2" r="1.7" class="s" style="stroke-width:0.85"/><path d="M8.6 8.4 L9.6 9.4" class="s" style="stroke-width:0.85"/></svg>
<div class="t" style="left:1053.6px;top:342.0px;font-size:7.7px;color:#2d3138"><i>文</i><i>库</i></div>
<svg style="left:1056.4px;top:363.2px" width="10" height="10" viewBox="0 0 10 10"><circle cx="5" cy="5" r="4.4" class="s" style="stroke-width:0.9"/><path d="M3.6 4 Q3.6 2.6 5 2.6 Q6.4 2.6 6.4 3.8 Q6.4 4.8 5 5.2 V6" class="s" style="stroke-width:0.85"/><circle cx="5" cy="7.4" r="0.5" fill="#3b4048"/></svg>
<div class="t" style="left:1053.6px;top:375.8px;font-size:7.7px;color:#2d3138"><i>帮</i><i>助</i></div>
<svg style="left:1056.4px;top:397px" width="10" height="10" viewBox="0 0 10 10"><path d="M0.8 0.8 H9.2 V7 H3.6 L1.8 9 V7 H0.8 Z" class="s" style="stroke-width:0.9"/></svg>
<div class="t" style="left:1053.6px;top:409.6px;font-size:7.7px;color:#2d3138"><i>批</i><i>注</i></div>
<svg style="left:1056.4px;top:430.8px" width="10" height="10" viewBox="0 0 10 10"><circle cx="1.4" cy="5" r="0.95" fill="#8a9098"/><circle cx="5" cy="5" r="0.95" fill="#8a9098"/><circle cx="8.6" cy="5" r="0.95" fill="#8a9098"/></svg>
<div class="t" style="left:1053.6px;top:443.40000000000003px;font-size:7.7px;color:#2d3138"><i>设</i><i>置</i></div>
<div class="a" style="left:0;top:591.5px;width:1080px;height:14.5px;background:rgba(255,255,255,0.22)"></div>
<div class="a" style="left:0;top:591px;width:1080px;height:1px;background:#d3d7dd"></div>
<div class="t" style="left:9px;top:594.3px;font-size:8px;color:#30343b"><i>幻</i><i>灯</i><i>片</i> 1 / 30</div>
<div class="a" style="left:62px;top:594px;width:1px;height:9px;background:#d5d9de"></div>
<svg style="left:72.4px;top:594px" width="9" height="9" viewBox="0 0 9 9"><path d="M1 1 Q4 2.4 4 5 M4 5 V8.4 M2 3.6 Q0.4 5.2 1.6 7 M8 1 Q5.4 2 5.4 4.4 Q5.4 6.4 7.4 6.4 Q8.6 6 8 4.4" class="s" style="stroke-width:0.8"/></svg>
<div class="t" style="left:84.4px;top:594.3px;font-size:8px;color:#30343b"><i>徽</i><i>章</i></div>
<div class="a" style="left:109.6px;top:594px;width:1px;height:9px;background:#cfd3d9"></div>
<svg style="left:120px;top:593.8px" width="9" height="9.4" viewBox="0 0 9 9.4"><path d="M7.4 4 V1.4 Q7.4 0.6 6.6 0.6 H1.4 Q0.6 0.6 0.6 1.4 V8 Q0.6 8.8 1.4 8.8 H3.6" class="s" style="stroke-width:0.8"/><path d="M2.2 2.8 H5.6" class="s" style="stroke-width:0.7"/><circle cx="5.8" cy="6.2" r="1.6" class="s" style="stroke-width:0.75"/><path d="M7 7.4 L8.4 8.8" class="s" style="stroke-width:0.8"/></svg>
<div class="t" style="left:132.2px;top:594.3px;font-size:8px;color:#30343b"><i>校</i><i>对</i></div>
<svg style="left:626.4px;top:594px" width="9" height="9" viewBox="0 0 9 9"><path d="M1.4 3.4 L4.5 0.8 L7.6 3.4 M0.8 3.6 H8.2 V6 Q8.2 8.4 4.5 8.4 Q0.8 8.4 0.8 6 Z" class="s" style="stroke-width:0.8"/></svg>
<div class="t" style="left:639px;top:594.3px;font-size:8px;color:#30343b"><i>智</i><i>能</i><i>美</i><i>化</i></div>
<svg class="a" style="left:673.4px;top:598.1px" width="2.46" height="1.41" viewBox="0 0 2.46 1.41"><path d="M0 0 L1.23 1.41 L2.46 0" fill="none" stroke="#33373e" stroke-width="1.1" stroke-linecap="round" stroke-linejoin="round"/></svg>
<div class="a" style="left:686.6px;top:594px;width:1px;height:9px;background:#cfd3d9"></div>
<svg style="left:697.6px;top:595px" width="8" height="7" viewBox="0 0 8 7"><path d="M0.4 0.5 H7.6 M0.4 3.5 H7.6 M0.4 6.5 H7.6" class="s" style="stroke-width:0.8"/></svg>
<div class="t" style="left:709.8px;top:594.3px;font-size:8px;color:#30343b"><i>备</i><i>注</i></div>
<svg class="a" style="left:729.2px;top:598.1px" width="2.46" height="1.41" viewBox="0 0 2.46 1.41"><path d="M0 0 L1.23 1.41 L2.46 0" fill="none" stroke="#33373e" stroke-width="1.1" stroke-linecap="round" stroke-linejoin="round"/></svg>
<svg style="left:747px;top:594.4px" width="10" height="9" viewBox="0 0 10 9"><path d="M8.4 4.6 V0.8 H0.6 V6.4 H2.4 V8.4 L4.4 6.4 H5.4" class="s" style="stroke-width:0.8"/><path d="M8.4 6 V9 M6.9 7.5 H9.9" class="s" style="stroke-width:0.8"/></svg>
<div class="t" style="left:758.8px;top:594.3px;font-size:8px;color:#30343b"><i>批</i><i>注</i></div>
<div class="a" style="left:789.4px;top:592.6px;width:15px;height:12.4px;background:#d3d7de;border-radius:1.5px"></div>
<svg style="left:792.6px;top:594.8px" width="9" height="8" viewBox="0 0 9 8"><rect x="0.5" y="0.5" width="8" height="7" rx="0.8" class="s" style="stroke-width:0.8"/><path d="M3 0.6 V7.4" class="s" style="stroke-width:0.8"/></svg>
<svg style="left:813.4px;top:594.8px" width="9" height="8" viewBox="0 0 9 8"><rect x="0.5" y="0.5" width="3" height="2.6" rx="0.5" class="s" style="stroke-width:0.75"/><rect x="5.5" y="0.5" width="3" height="2.6" rx="0.5" class="s" style="stroke-width:0.75"/><rect x="0.5" y="4.9" width="3" height="2.6" rx="0.5" class="s" style="stroke-width:0.75"/><rect x="5.5" y="4.9" width="3" height="2.6" rx="0.5" class="s" style="stroke-width:0.75"/></svg>
<svg style="left:835px;top:594.8px" width="9" height="8" viewBox="0 0 9 8"><path d="M4.5 1.6 Q2.6 0.2 0.5 0.8 V6.6 Q2.6 6 4.5 7.4 Q6.4 6 8.5 6.6 V0.8 Q6.4 0.2 4.5 1.6 V7.2" class="s" style="stroke-width:0.8"/></svg>
<div class="a" style="left:849.6px;top:594px;width:1px;height:9px;background:#cfd3d9"></div>
<div class="a" style="left:859px;top:592.7px;width:13.2px;height:11.2px;background:#ee6c1a;border-radius:1.8px"></div>
<svg style="left:863.6px;top:595.6px" width="4.8" height="5.4" viewBox="0 0 5 5.6"><path d="M0.2 0.2 L4.8 2.8 L0.2 5.4 Z" fill="#fff"/></svg>
<svg class="a" style="left:878.6px;top:598.1px" width="2.46" height="1.41" viewBox="0 0 2.46 1.41"><path d="M0 0 L1.23 1.41 L2.46 0" fill="none" stroke="#33373e" stroke-width="1.1" stroke-linecap="round" stroke-linejoin="round"/></svg>
<div class="a" style="left:891px;top:594px;width:1px;height:9px;background:#cfd3d9"></div>
<svg style="left:900.4px;top:594.6px" width="9" height="8.4" viewBox="0 0 9 8.4"><path d="M0.5 2.4 V0.5 H2.6 M6.4 0.5 H8.5 V2.4 M8.5 6 V7.9 H6.4 M2.6 7.9 H0.5 V6" class="s" style="stroke-width:0.8"/><rect x="2.8" y="2.6" width="3.4" height="3.2" class="s" style="stroke-width:0.75"/></svg>
<div class="t" style="left:924.4px;top:594.3px;font-size:8px;color:#30343b">87%</div>
<svg class="a" style="left:950.8px;top:598.1px" width="2.46" height="1.41" viewBox="0 0 2.46 1.41"><path d="M0 0 L1.23 1.41 L2.46 0" fill="none" stroke="#33373e" stroke-width="1.1" stroke-linecap="round" stroke-linejoin="round"/></svg>
<div class="a" style="left:965.6px;top:597.9px;width:7.4px;height:1px;background:#33373e"></div>
<div class="a" style="left:982.6px;top:597.8px;width:67.6px;height:1px;background:#c9cdd3"></div>
<div class="a" style="left:982.6px;top:597.7px;width:27px;height:1.2px;background:#4b7be3"></div>
<div class="a" style="left:1009.2px;top:595.7px;width:5.2px;height:5.2px;background:#fff;border:1px solid #c3c7ce;border-radius:50%"></div>
<div class="a" style="left:1011.1px;top:597.6px;width:1.4px;height:1.4px;background:#7d828a;border-radius:50%"></div>
<svg style="left:1061.4px;top:595.2px" width="6.4" height="6.4" viewBox="0 0 7.6 7.6"><path d="M3.8 0.3 V7.3 M0.3 3.8 H7.3" class="s" style="stroke:#33373e;stroke-width:1.1"/></svg>
<div class="a" style="left:104.6px;top:49px;width:100.2px;height:85px;background:#fff;border:1px solid #dcdfe4;border-right-color:#b4b8be;border-bottom-color:#c9ccd2;border-radius:2.5px;box-shadow:0 1px 3px rgba(90,100,120,0.22)"></div>
<div class="t" style="left:113px;top:56.6px;font-size:8.45px;font-weight:bold;color:#383c44"><i>打</i><i>印</i><i>预</i><i>览</i> (Ctrl+Alt+P)</div>
<div class="t" style="left:113px;top:73.2px;font-size:7.8px;color:#666b73"><i>查</i><i>看</i><i>文</i><i>档</i><i>打</i><i>印</i><i>时</i><i>的</i><i>效</i></div>
<div class="t" style="left:113px;top:84.2px;font-size:7.8px;color:#666b73"><i>果</i><i>，</i><i>对</i><i>打</i><i>印</i><i>做</i><i>详</i><i>细</i><i>设</i></div>
<div class="t" style="left:113px;top:95.2px;font-size:7.8px;color:#666b73"><i>置</i><i>，</i><i>如</i><i>选</i><i>择</i><i>打</i><i>印</i><i>机</i><i>、</i><i>打</i></div>
<div class="t" style="left:113px;top:106.2px;font-size:7.8px;color:#666b73"><i>印</i><i>份</i><i>数</i><i>、</i><i>打</i><i>印</i><i>方</i><i>式</i><i>、</i><i>打</i></div>
<div class="t" style="left:113px;top:117.2px;font-size:7.8px;color:#666b73"><i>印</i><i>范</i><i>围</i><i>等</i><i>。</i></div>
</div></body></html>
